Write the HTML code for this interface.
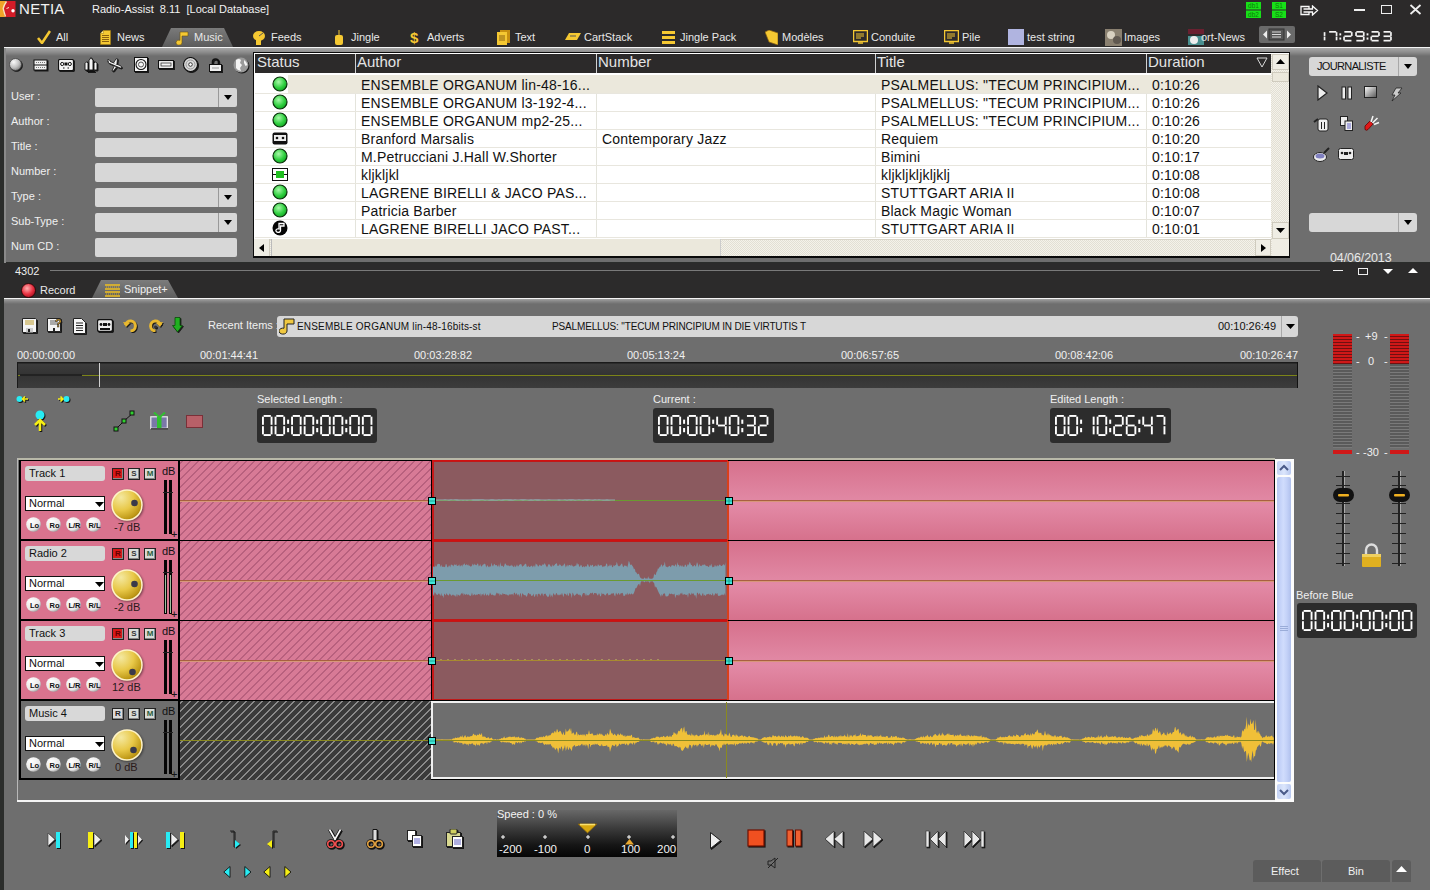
<!DOCTYPE html>
<html><head><meta charset="utf-8">
<style>
*{box-sizing:border-box;margin:0;padding:0}
html,body{width:1430px;height:890px;overflow:hidden;background:#2b2d2b;font-family:"Liberation Sans",sans-serif;font-size:11px;color:#fff}
.a{position:absolute}
#top{left:0;top:0;width:1430px;height:48px;background:#2c2a2a}
#upper{left:4px;top:48px;width:1426px;height:214px;background:#6e6e6e}
#status{left:0;top:262px;width:1430px;height:36px;background:#2c2a2a}
#lower{left:4px;top:298px;width:1426px;height:592px;background:#6e6e6e}
.tab{top:29px;height:18px;font-size:11px;color:#e8e8e8;line-height:16px}
.lbl{left:11px;font-size:11px;color:#f0f0f0}
.inp{left:95px;width:142px;height:19px;background:#d7d7d7;border-radius:2px}
.dd{position:absolute;right:0;top:0;width:19px;height:19px;border-left:1px solid #999}
.dd:after{content:"";position:absolute;left:5px;top:7px;border-left:4px solid transparent;border-right:4px solid transparent;border-top:5px solid #000}
#tbl{left:254px;top:53px;width:1035px;height:204px;background:#fff;border:1px solid #222}
.th{position:absolute;top:0;height:19px;background:#2c2a2a;color:#e6e6e6;font-size:14px;line-height:18px;padding-left:2px;border-left:1px solid #ccc}
.rowx{position:absolute;left:0;width:1015px;height:18px;border-bottom:1px solid #e8e8e0;font-size:14px;color:#111;line-height:18px}
.c{position:absolute;top:0;height:18px;white-space:nowrap;overflow:hidden}
.lcd{background:#2b2b2b;border-radius:3px;color:#fff;font-family:"Liberation Mono",monospace}
</style></head><body>

<div id="top" class="a">
 <svg class="a" style="left:0;top:0" width="16" height="18"><rect x="0" y="1" width="15.5" height="16" fill="#d41c28"/><path d="M0 1h6L3 8.5 5 17H0z" fill="#f0a428"/><path d="M6.5 1.5Q4 5 3.2 8.5 4 12 5.5 16.5" stroke="#f8e8c0" stroke-width="1.3" fill="none"/><path d="M6.5 8.5l2.5-1" stroke="#f8e8c0" stroke-width="1"/><circle cx="13" cy="10.8" r="1.7" fill="#fff"/></svg>
 <div class="a" style="left:19px;top:0px;font-size:15px;color:#f2f2f2;letter-spacing:0.3px">NETIA</div>
 <div class="a" style="left:92px;top:3px;font-size:11px;color:#f2f2f2">Radio-Assist&nbsp; 8.11&nbsp; [Local Database]</div>
 <svg class="a" style="left:1246px;top:2px" width="41" height="17"><g fill="#18e018"><rect x="0" y="0" width="15" height="7.5"/><rect x="0" y="8.5" width="15" height="7.5"/><rect x="26" y="0" width="14" height="7.5"/><rect x="26" y="8.5" width="14" height="7.5"/></g><g font-family="Liberation Sans" font-size="6.5" fill="#0a7a0a" text-anchor="middle"><text x="7.5" y="6.3">db1</text><text x="7.5" y="14.8">db2</text><text x="33" y="6.3">S1</text><text x="33" y="14.8">S2</text></g></svg>
 <svg class="a" style="left:1300px;top:5px" width="19" height="11"><path d="M1 1.5h8v2.5h3.5V1l5 4.5-5 4.5V7H9v2.5H1z M3.5 4h5.5 M3.5 7h5.5" stroke="#fafafa" stroke-width="1.3" fill="none"/></svg>
 <div class="a" style="left:1354px;top:9px;width:11px;height:1.5px;background:#eee"></div>
 <div class="a" style="left:1381px;top:5px;width:11px;height:9px;border:1.5px solid #eee"></div>
 <svg class="a" style="left:1409px;top:4px" width="13" height="11"><path d="M1.5 1l10 9M11.5 1l-10 9" stroke="#eee" stroke-width="1.8"/></svg>
 <div class="a" style="left:162px;top:28px;width:71px;height:19px;background:linear-gradient(#7a7a7a,#5c5c5c);clip-path:polygon(9px 0,62px 0,71px 19px,0 19px);border-radius:3px 3px 0 0"></div>
 <div class="a" style="left:37px;top:30px"><svg width="14" height="14"><path d="M1 8l4 5 8-12" stroke="#f5c832" stroke-width="2.6" fill="none"/></svg></div>
 <div class="a tab" style="left:56px">All</div>
 <div class="a" style="left:100px;top:30px"><svg width="11" height="15"><path d="M3.5 .5h7v14H.5V3.5z" fill="#f5c832" stroke="#a88010" stroke-width=".6"/><path d="M.5 3.5h3v-3" fill="#fff0a0" stroke="#a88010" stroke-width=".6"/><path d="M2 5.5h7M2 7.5h7M2 9.5h7M2 11.5h7" stroke="#8a6010" stroke-width="1"/></svg></div>
 <div class="a tab" style="left:117px">News</div>
 <div class="a" style="left:175px;top:30px"><svg width="14" height="15"><path d="M5 2h8v4H7v6.5a3 2.5 0 1 1-2-2.2z" fill="#f5c832" stroke="#6a5010" stroke-width=".6"/></svg></div>
 <div class="a tab" style="left:194px">Music</div>
 <div class="a" style="left:253px;top:30px"><svg width="13" height="15"><ellipse cx="6" cy="6" rx="6" ry="5" fill="#f5c832"/><rect x="3" y="10" width="5" height="5" fill="#f5c832"/><path d="M6 6l4-3" stroke="#555"/></svg></div>
 <div class="a tab" style="left:271px">Feeds</div>
 <div class="a" style="left:334px;top:30px"><svg width="10" height="15"><rect x="1" y="5" width="8" height="10" rx="2" fill="#f5c832"/><path d="M5 0v5" stroke="#f5c832"/></svg></div>
 <div class="a tab" style="left:351px">Jingle</div>
 <div class="a" style="left:410px;top:30px"><svg width="9" height="15"><text x="0" y="13" font-size="15" font-weight="bold" fill="#f5c832" font-family="Liberation Sans">$</text></svg></div>
 <div class="a tab" style="left:427px">Adverts</div>
 <div class="a" style="left:497px;top:30px"><svg width="13" height="15"><rect x="3" y="0" width="10" height="13" fill="#c89010"/><rect x="0" y="2" width="10" height="13" fill="#f5c832"/><path d="M2 6h6M2 8h6M2 10h6" stroke="#8a6010"/></svg></div>
 <div class="a tab" style="left:515px">Text</div>
 <div class="a" style="left:565px;top:30px"><svg width="16" height="12"><path d="M4 3h12l-4 7H0z" fill="#f5c832"/><path d="M5 6h6" stroke="#555"/></svg></div>
 <div class="a tab" style="left:584px">CartStack</div>
 <div class="a" style="left:662px;top:30px"><svg width="13" height="15"><rect x="0" y="1" width="13" height="3" fill="#f5c832"/><rect x="0" y="6" width="13" height="3" fill="#f5c832"/><rect x="0" y="11" width="13" height="3" fill="#f5c832"/></svg></div>
 <div class="a tab" style="left:680px">Jingle Pack</div>
 <div class="a" style="left:765px;top:30px"><svg width="13" height="15"><path d="M0 2l4 -2 9 3v12l-9-3z" fill="#f5c832" stroke="#8a6010" stroke-width=".7"/></svg></div>
 <div class="a tab" style="left:782px">Modèles</div>
 <div class="a" style="left:853px;top:30px"><svg width="15" height="14"><rect x="0.5" y="0.5" width="14" height="11" fill="none" stroke="#f5c832" stroke-width="1.5"/><path d="M3 4h8M3 6h8M3 8h5" stroke="#f5c832"/><path d="M5 13h5" stroke="#f5c832" stroke-width="1.5"/></svg></div>
 <div class="a tab" style="left:871px">Conduite</div>
 <div class="a" style="left:944px;top:30px"><svg width="15" height="14"><rect x="0.5" y="0.5" width="14" height="11" fill="none" stroke="#f5c832" stroke-width="1.5"/><path d="M3 4h8M3 6h8M3 8h5" stroke="#f5c832"/><path d="M5 13h5" stroke="#f5c832" stroke-width="1.5"/></svg></div>
 <div class="a tab" style="left:962px">Pile</div>
 <div class="a" style="left:1008px;top:29px"><svg width="16" height="16"><rect x="0" y="0" width="16" height="16" fill="#b0b4e0"/></svg></div>
 <div class="a tab" style="left:1027px">test string</div>
 <div class="a" style="left:1105px;top:29px"><svg width="17" height="17"><rect x="0" y="0" width="17" height="17" fill="#8a8070"/><circle cx="6" cy="6" r="4" fill="#d8d0c0"/><circle cx="12" cy="11" r="4" fill="#605850"/></svg></div>
 <div class="a tab" style="left:1124px">Images</div>
 <div class="a" style="left:1188px;top:29px"><svg width="16" height="16"><rect x="0" y="0" width="16" height="5" fill="#6a2030"/><rect x="0" y="7" width="16" height="9" fill="#4a9090"/><circle cx="6" cy="11" r="4" fill="#eee"/></svg></div>
 <div class="a tab" style="left:1201px">ort-News</div>

 <div class="a" style="left:1259px;top:26px;width:36px;height:17px;background:#6a6a6a;border-radius:2px"></div>
 <svg class="a" style="left:1259px;top:26px" width="36" height="17"><path d="M4 8.5l4-4v8z M32 8.5l-4-4v8z" fill="#eee"/><rect x="10" y="3" width="15" height="11" fill="#555" stroke="#333"/><path d="M13 6h9M13 8.5h9M13 11h9" stroke="#ddd"/></svg>
 <svg class="a" style="left:1316px;top:30.5px" width="77" height="12"><g fill="#f4f4f4"><rect x="7.70" y="1.15" width="1.70" height="3.80"/><rect x="7.70" y="5.55" width="1.70" height="3.80"/><rect x="13.15" y="0.00" width="7.10" height="1.70"/><rect x="19.70" y="1.15" width="1.70" height="3.80"/><rect x="19.70" y="5.55" width="1.70" height="3.80"/><rect x="23.40" y="2.31" width="1.80" height="2.10"/><rect x="23.40" y="6.51" width="1.80" height="2.10"/><rect x="28.35" y="0.00" width="7.10" height="1.70"/><rect x="28.35" y="8.80" width="7.10" height="1.70"/><rect x="28.35" y="4.40" width="7.10" height="1.70"/><rect x="27.20" y="5.55" width="1.70" height="3.80"/><rect x="34.90" y="1.15" width="1.70" height="3.80"/><rect x="40.35" y="0.00" width="7.10" height="1.70"/><rect x="40.35" y="8.80" width="7.10" height="1.70"/><rect x="40.35" y="4.40" width="7.10" height="1.70"/><rect x="39.20" y="1.15" width="1.70" height="3.80"/><rect x="46.90" y="1.15" width="1.70" height="3.80"/><rect x="46.90" y="5.55" width="1.70" height="3.80"/><rect x="50.60" y="2.31" width="1.80" height="2.10"/><rect x="50.60" y="6.51" width="1.80" height="2.10"/><rect x="55.55" y="0.00" width="7.10" height="1.70"/><rect x="55.55" y="8.80" width="7.10" height="1.70"/><rect x="55.55" y="4.40" width="7.10" height="1.70"/><rect x="54.40" y="5.55" width="1.70" height="3.80"/><rect x="62.10" y="1.15" width="1.70" height="3.80"/><rect x="67.55" y="0.00" width="7.10" height="1.70"/><rect x="67.55" y="8.80" width="7.10" height="1.70"/><rect x="67.55" y="4.40" width="7.10" height="1.70"/><rect x="74.10" y="1.15" width="1.70" height="3.80"/><rect x="74.10" y="5.55" width="1.70" height="3.80"/></g></svg>
 <div class="a" style="left:4px;top:47px;width:1426px;height:1px;background:#f4f4f4"></div>
</div>


<div id="upper" class="a" style="background:linear-gradient(#a8a8a8 0,#8e8e8e 4px,#6e6e6e 8px,#6e6e6e)">
</div>
<div class="a" style="left:4px;top:48px;width:2px;height:215px;background:#8a8a8a"></div>
<svg class="a" style="left:9px;top:58px;filter:drop-shadow(1px 1px 0 #1a1a1a)" width="13" height="13"><defs><radialGradient id="sph" cx=".35" cy=".3" r=".75"><stop offset="0" stop-color="#fafafa"/><stop offset=".6" stop-color="#c0c0c0"/><stop offset="1" stop-color="#808080"/></radialGradient></defs><circle cx="6.5" cy="6.5" r="6" fill="url(#sph)" stroke="#444" stroke-width=".8"/></svg>
<svg class="a" style="left:33px;top:59px;filter:drop-shadow(1px 1px 0 #1a1a1a)" width="15" height="12"><rect x=".5" y=".5" width="14" height="11" fill="#111"/><rect x="1.5" y="1.5" width="12" height="4" fill="#f0f0f0"/><rect x="1.5" y="6.5" width="12" height="4" fill="#f0f0f0"/><path d="M3 3.5h9M3 8.5h9" stroke="#777" stroke-dasharray="1 1"/></svg>
<svg class="a" style="left:58px;top:59px;filter:drop-shadow(1px 1px 0 #1a1a1a)" width="16" height="12"><rect x=".5" y=".5" width="15" height="11" rx="1.5" fill="#f4f4f4" stroke="#111" stroke-width="1.2"/><circle cx="4.2" cy="5" r="1.6" fill="none" stroke="#111"/><circle cx="11.8" cy="5" r="1.6" fill="none" stroke="#111"/><rect x="6.5" y="3.5" width="3" height="3" fill="#111"/><path d="M5 9h1.5M9.5 9H11" stroke="#111"/></svg>
<svg class="a" style="left:84px;top:57px;filter:drop-shadow(1px 1px 0 #1a1a1a)" width="14" height="15"><path d="M7 .5l2 3v9.5H5V3.5z" fill="#f4f4f4" stroke="#111" stroke-width=".9"/><path d="M1 13V6.5l2-2 1 2V13zM13 13V6.5l-2-2-1 2V13z" fill="#f4f4f4" stroke="#111" stroke-width=".9"/><path d="M3 14.5h8" stroke="#111" stroke-width="1.2"/></svg>
<svg class="a" style="left:107px;top:58px;filter:drop-shadow(1px 1px 0 #1a1a1a)" width="16" height="14"><path d="M1 3.5q0-1 1-.5l11 4.5q2 1 1.5 2t-2.5 0L1.5 5z" fill="#f4f4f4" stroke="#111" stroke-width=".8"/><path d="M6.5 5L9 .8h1.5L9.8 7M7 8.5L5 13h1.5l3-4" fill="#f4f4f4" stroke="#111" stroke-width=".8"/><path d="M1.5 4L.8 1.5h1.2l1.8 2.5" fill="#f4f4f4" stroke="#111" stroke-width=".7"/></svg>
<svg class="a" style="left:134px;top:57px;filter:drop-shadow(1px 1px 0 #1a1a1a)" width="14" height="15"><rect x=".5" y=".5" width="13" height="14" fill="#f4f4f4" stroke="#111"/><circle cx="7" cy="7.5" r="5" fill="none" stroke="#111" stroke-width="1.1"/><circle cx="7" cy="7.5" r="2.5" fill="none" stroke="#555" stroke-width="1"/></svg>
<svg class="a" style="left:158px;top:60px;filter:drop-shadow(1px 1px 0 #1a1a1a)" width="16" height="9"><rect x=".5" y=".5" width="15" height="8" fill="#f4f4f4" stroke="#111" stroke-width="1.1"/><rect x="3" y="3" width="10" height="3" fill="none" stroke="#333" stroke-width=".8"/></svg>
<svg class="a" style="left:183px;top:57px;filter:drop-shadow(1px 1px 0 #1a1a1a)" width="15" height="15"><circle cx="7.5" cy="7.5" r="7" fill="#d8d8d8" stroke="#111" stroke-width="1.1"/><circle cx="7.5" cy="7.5" r="4.5" fill="none" stroke="#999"/><circle cx="7.5" cy="7.5" r="1.8" fill="#fff" stroke="#111" stroke-width=".8"/></svg>
<svg class="a" style="left:209px;top:58px;filter:drop-shadow(1px 1px 0 #1a1a1a)" width="13" height="14"><path d="M3.5 6.5V4a3 3 0 0 1 6 0v2.5" stroke="#111" stroke-width="1.6" fill="none"/><rect x=".5" y="6.5" width="12" height="7" fill="#f0f0f0" stroke="#111"/><path d="M3 10h7" stroke="#999"/></svg>
<svg class="a" style="left:233px;top:57px;filter:drop-shadow(1px 1px 0 #1a1a1a)" width="16" height="16"><circle cx="8" cy="8" r="7.5" fill="#9a9a9a"/><path d="M3 3q3-2 5 0l-1 3 2 2-2 3 1 3q-3 0-5-3zM11 3q3 2 3.5 5l-2 1-1.5-3z" fill="#f4f4f4"/></svg>
<div class="a lbl" style="top:90px">User :</div>
<div class="a inp" style="top:88px"><div class="dd"></div></div>
<div class="a lbl" style="top:115px">Author :</div>
<div class="a inp" style="top:113px"></div>
<div class="a lbl" style="top:140px">Title :</div>
<div class="a inp" style="top:138px"></div>
<div class="a lbl" style="top:165px">Number :</div>
<div class="a inp" style="top:163px"></div>
<div class="a lbl" style="top:190px">Type :</div>
<div class="a inp" style="top:188px"><div class="dd"></div></div>
<div class="a lbl" style="top:215px">Sub-Type :</div>
<div class="a inp" style="top:213px"><div class="dd"></div></div>
<div class="a lbl" style="top:240px">Num CD :</div>
<div class="a inp" style="top:238px"></div>

<div class="a" style="left:253px;top:52px;width:1037px;height:206px;background:#0a0a0a"></div>
<div class="a" style="left:254px;top:53px;width:1035px;height:203px;background:#fff"></div>
<div class="a" style="left:255px;top:54px;width:1016px;height:19px;background:#2c2a2a"></div>
<div class="a" style="left:257px;top:54px;height:19px;font-size:15px;line-height:16px;color:#e4e4e4">Status</div>
<div class="a" style="left:357px;top:54px;height:19px;font-size:15px;line-height:16px;color:#e4e4e4">Author</div>
<div class="a" style="left:355px;top:54px;width:1px;height:19px;background:#d0d0d0"></div>
<div class="a" style="left:355px;top:75px;width:1px;height:162px;background:#e4e4dc"></div>
<div class="a" style="left:598px;top:54px;height:19px;font-size:15px;line-height:16px;color:#e4e4e4">Number</div>
<div class="a" style="left:596px;top:54px;width:1px;height:19px;background:#d0d0d0"></div>
<div class="a" style="left:596px;top:75px;width:1px;height:162px;background:#e4e4dc"></div>
<div class="a" style="left:877px;top:54px;height:19px;font-size:15px;line-height:16px;color:#e4e4e4">Title</div>
<div class="a" style="left:875px;top:54px;width:1px;height:19px;background:#d0d0d0"></div>
<div class="a" style="left:875px;top:75px;width:1px;height:162px;background:#e4e4dc"></div>
<div class="a" style="left:1148px;top:54px;height:19px;font-size:15px;line-height:16px;color:#e4e4e4">Duration</div>
<div class="a" style="left:1146px;top:54px;width:1px;height:19px;background:#d0d0d0"></div>
<div class="a" style="left:1146px;top:75px;width:1px;height:162px;background:#e4e4dc"></div>
<svg class="a" style="left:1256px;top:57px" width="12" height="11"><path d="M1 1h10L6 10z" fill="none" stroke="#d8d8d8" stroke-width="1"/></svg>
<div class="a" style="left:288px;top:75px;width:983px;height:18px;background:#ebe8dc"></div>
<div class="a" style="left:255px;top:93px;width:1016px;height:1px;background:#e8e6de"></div>
<div class="a" style="left:272px;top:76px;line-height:0"><svg width="16" height="16"><defs><radialGradient id="gg0" cx=".4" cy=".35" r=".7"><stop offset="0" stop-color="#a8f8a8"/><stop offset=".6" stop-color="#30d040"/><stop offset="1" stop-color="#10a020"/></radialGradient></defs><circle cx="8" cy="8" r="7" fill="url(#gg0)" stroke="#0a300a" stroke-width="1.2"/></svg></div>
<div class="a" style="left:361px;top:76px;font-size:14px;line-height:18px;color:#111;white-space:nowrap;letter-spacing:0.2px">ENSEMBLE ORGANUM lin-48-16...</div>
<div class="a" style="left:881px;top:76px;font-size:14px;line-height:18px;color:#111;white-space:nowrap;letter-spacing:0.2px">PSALMELLUS: "TECUM PRINCIPIUM...</div>
<div class="a" style="left:1152px;top:76px;font-size:14px;line-height:18px;color:#111;white-space:nowrap;letter-spacing:0.2px">0:10:26</div>
<div class="a" style="left:255px;top:111px;width:1016px;height:1px;background:#e8e6de"></div>
<div class="a" style="left:272px;top:94px;line-height:0"><svg width="16" height="16"><defs><radialGradient id="gg1" cx=".4" cy=".35" r=".7"><stop offset="0" stop-color="#a8f8a8"/><stop offset=".6" stop-color="#30d040"/><stop offset="1" stop-color="#10a020"/></radialGradient></defs><circle cx="8" cy="8" r="7" fill="url(#gg1)" stroke="#0a300a" stroke-width="1.2"/></svg></div>
<div class="a" style="left:361px;top:94px;font-size:14px;line-height:18px;color:#111;white-space:nowrap;letter-spacing:0.2px">ENSEMBLE ORGANUM l3-192-4...</div>
<div class="a" style="left:881px;top:94px;font-size:14px;line-height:18px;color:#111;white-space:nowrap;letter-spacing:0.2px">PSALMELLUS: "TECUM PRINCIPIUM...</div>
<div class="a" style="left:1152px;top:94px;font-size:14px;line-height:18px;color:#111;white-space:nowrap;letter-spacing:0.2px">0:10:26</div>
<div class="a" style="left:255px;top:129px;width:1016px;height:1px;background:#e8e6de"></div>
<div class="a" style="left:272px;top:112px;line-height:0"><svg width="16" height="16"><defs><radialGradient id="gg2" cx=".4" cy=".35" r=".7"><stop offset="0" stop-color="#a8f8a8"/><stop offset=".6" stop-color="#30d040"/><stop offset="1" stop-color="#10a020"/></radialGradient></defs><circle cx="8" cy="8" r="7" fill="url(#gg2)" stroke="#0a300a" stroke-width="1.2"/></svg></div>
<div class="a" style="left:361px;top:112px;font-size:14px;line-height:18px;color:#111;white-space:nowrap;letter-spacing:0.2px">ENSEMBLE ORGANUM mp2-25...</div>
<div class="a" style="left:881px;top:112px;font-size:14px;line-height:18px;color:#111;white-space:nowrap;letter-spacing:0.2px">PSALMELLUS: "TECUM PRINCIPIUM...</div>
<div class="a" style="left:1152px;top:112px;font-size:14px;line-height:18px;color:#111;white-space:nowrap;letter-spacing:0.2px">0:10:26</div>
<div class="a" style="left:255px;top:147px;width:1016px;height:1px;background:#e8e6de"></div>
<div class="a" style="left:272px;top:132px;line-height:0"><svg width="16" height="13"><rect x=".5" y=".5" width="15" height="12" rx="2" fill="#111"/><rect x="2" y="3" width="12" height="6" fill="#eee"/><circle cx="5" cy="6" r="1.3" fill="#111"/><circle cx="11" cy="6" r="1.3" fill="#111"/></svg></div>
<div class="a" style="left:361px;top:130px;font-size:14px;line-height:18px;color:#111;white-space:nowrap;letter-spacing:0.2px">Branford Marsalis</div>
<div class="a" style="left:602px;top:130px;font-size:14px;line-height:18px;color:#111;white-space:nowrap;letter-spacing:0.2px">Contemporary Jazz</div>
<div class="a" style="left:881px;top:130px;font-size:14px;line-height:18px;color:#111;white-space:nowrap;letter-spacing:0.2px">Requiem</div>
<div class="a" style="left:1152px;top:130px;font-size:14px;line-height:18px;color:#111;white-space:nowrap;letter-spacing:0.2px">0:10:20</div>
<div class="a" style="left:255px;top:165px;width:1016px;height:1px;background:#e8e6de"></div>
<div class="a" style="left:272px;top:148px;line-height:0"><svg width="16" height="16"><defs><radialGradient id="gg4" cx=".4" cy=".35" r=".7"><stop offset="0" stop-color="#a8f8a8"/><stop offset=".6" stop-color="#30d040"/><stop offset="1" stop-color="#10a020"/></radialGradient></defs><circle cx="8" cy="8" r="7" fill="url(#gg4)" stroke="#0a300a" stroke-width="1.2"/></svg></div>
<div class="a" style="left:361px;top:148px;font-size:14px;line-height:18px;color:#111;white-space:nowrap;letter-spacing:0.2px">M.Petrucciani J.Hall W.Shorter</div>
<div class="a" style="left:881px;top:148px;font-size:14px;line-height:18px;color:#111;white-space:nowrap;letter-spacing:0.2px">Bimini</div>
<div class="a" style="left:1152px;top:148px;font-size:14px;line-height:18px;color:#111;white-space:nowrap;letter-spacing:0.2px">0:10:17</div>
<div class="a" style="left:255px;top:183px;width:1016px;height:1px;background:#e8e6de"></div>
<div class="a" style="left:272px;top:168px;line-height:0"><svg width="16" height="13"><rect x=".5" y=".5" width="15" height="12" fill="#fff" stroke="#111"/><path d="M1 6.5h14" stroke="#111"/><rect x="4" y="3" width="8" height="7" fill="#20c020"/></svg></div>
<div class="a" style="left:361px;top:166px;font-size:14px;line-height:18px;color:#111;white-space:nowrap;letter-spacing:0.2px">kljkljkl</div>
<div class="a" style="left:881px;top:166px;font-size:14px;line-height:18px;color:#111;white-space:nowrap;letter-spacing:0.2px">kljkljkljkljklj</div>
<div class="a" style="left:1152px;top:166px;font-size:14px;line-height:18px;color:#111;white-space:nowrap;letter-spacing:0.2px">0:10:08</div>
<div class="a" style="left:255px;top:201px;width:1016px;height:1px;background:#e8e6de"></div>
<div class="a" style="left:272px;top:184px;line-height:0"><svg width="16" height="16"><defs><radialGradient id="gg6" cx=".4" cy=".35" r=".7"><stop offset="0" stop-color="#a8f8a8"/><stop offset=".6" stop-color="#30d040"/><stop offset="1" stop-color="#10a020"/></radialGradient></defs><circle cx="8" cy="8" r="7" fill="url(#gg6)" stroke="#0a300a" stroke-width="1.2"/></svg></div>
<div class="a" style="left:361px;top:184px;font-size:14px;line-height:18px;color:#111;white-space:nowrap;letter-spacing:0.2px">LAGRENE BIRELLI &amp; JACO PAS...</div>
<div class="a" style="left:881px;top:184px;font-size:14px;line-height:18px;color:#111;white-space:nowrap;letter-spacing:0.2px">STUTTGART ARIA II</div>
<div class="a" style="left:1152px;top:184px;font-size:14px;line-height:18px;color:#111;white-space:nowrap;letter-spacing:0.2px">0:10:08</div>
<div class="a" style="left:255px;top:219px;width:1016px;height:1px;background:#e8e6de"></div>
<div class="a" style="left:272px;top:202px;line-height:0"><svg width="16" height="16"><defs><radialGradient id="gg7" cx=".4" cy=".35" r=".7"><stop offset="0" stop-color="#a8f8a8"/><stop offset=".6" stop-color="#30d040"/><stop offset="1" stop-color="#10a020"/></radialGradient></defs><circle cx="8" cy="8" r="7" fill="url(#gg7)" stroke="#0a300a" stroke-width="1.2"/></svg></div>
<div class="a" style="left:361px;top:202px;font-size:14px;line-height:18px;color:#111;white-space:nowrap;letter-spacing:0.2px">Patricia Barber</div>
<div class="a" style="left:881px;top:202px;font-size:14px;line-height:18px;color:#111;white-space:nowrap;letter-spacing:0.2px">Black Magic Woman</div>
<div class="a" style="left:1152px;top:202px;font-size:14px;line-height:18px;color:#111;white-space:nowrap;letter-spacing:0.2px">0:10:07</div>
<div class="a" style="left:255px;top:237px;width:1016px;height:1px;background:#e8e6de"></div>
<div class="a" style="left:272px;top:220px;line-height:0"><svg width="16" height="16"><circle cx="8" cy="8" r="7.5" fill="#050505"/><path d="M7 3.5h5v2.5H8.5v4.5a2.3 1.8 0 1 1-1.5-1.6z" fill="none" stroke="#fff" stroke-width="1.3"/></svg></div>
<div class="a" style="left:361px;top:220px;font-size:14px;line-height:18px;color:#111;white-space:nowrap;letter-spacing:0.2px">LAGRENE BIRELLI JACO PAST...</div>
<div class="a" style="left:881px;top:220px;font-size:14px;line-height:18px;color:#111;white-space:nowrap;letter-spacing:0.2px">STUTTGART ARIA II</div>
<div class="a" style="left:1152px;top:220px;font-size:14px;line-height:18px;color:#111;white-space:nowrap;letter-spacing:0.2px">0:10:01</div>
<div class="a" style="left:1271px;top:54px;width:18px;height:185px;background:repeating-conic-gradient(#f4f2ea 0 25%,#e2dfd4 0 50%) 0 0/2px 2px"></div>
<div class="a" style="left:1272px;top:54px;width:17px;height:16px;background:#efede4;border:1px solid #cfcbbe"></div>
<svg class="a" style="left:1275px;top:58px" width="11" height="7"><path d="M1 6h9L5.5 1z" fill="#000"/></svg>
<div class="a" style="left:1272px;top:72px;width:17px;height:10px;background:#ebe8dc;border:1px solid #cfcbbe"></div>
<div class="a" style="left:1272px;top:222px;width:17px;height:17px;background:#efede4;border:1px solid #cfcbbe"></div>
<svg class="a" style="left:1275px;top:227px" width="11" height="7"><path d="M1 1h9L5.5 6z" fill="#000"/></svg>
<div class="a" style="left:254px;top:239px;width:1018px;height:17px;background:repeating-conic-gradient(#f4f2ea 0 25%,#e2dfd4 0 50%) 0 0/2px 2px;border-top:1px solid #d8d4c8"></div>
<div class="a" style="left:254px;top:239px;width:16px;height:17px;background:#efede4;border-right:1px solid #cfcbbe"></div>
<svg class="a" style="left:258px;top:243px" width="7" height="10"><path d="M6 1v8L1 5z" fill="#000"/></svg>
<div class="a" style="left:271px;top:239px;width:450px;height:17px;background:#ebe8dc;border-left:1px solid #bbb;border-right:1px solid #ccc"></div>
<div class="a" style="left:1255px;top:239px;width:16px;height:17px;background:#efede4;border:1px solid #cfcbbe"></div>
<svg class="a" style="left:1260px;top:243px" width="7" height="10"><path d="M1 1v8L6 5z" fill="#000"/></svg>
<div class="a" style="left:1272px;top:239px;width:17px;height:17px;background:#efede4"></div>

<div class="a" style="left:1309px;top:57px;width:108px;height:19px;background:#d7d7d7;border-radius:3px"><div class="dd" style="border-left:1px solid #a8a8a8"></div></div>
<div class="a" style="left:1317px;top:59px;font-size:11px;color:#111;line-height:14px;letter-spacing:-0.65px">JOURNALISTE</div>
<svg class="a" style="left:1316px;top:85px" width="12" height="16"><path d="M2 1l9 7-9 7z" fill="#eee" stroke="#222" stroke-width="1.2"/></svg>
<svg class="a" style="left:1341px;top:86px" width="12" height="14"><rect x="1" y="1" width="3.5" height="12" fill="#eee" stroke="#222"/><rect x="7" y="1" width="3.5" height="12" fill="#eee" stroke="#222"/></svg>
<svg class="a" style="left:1364px;top:86px" width="14" height="13"><defs><linearGradient id="stg" x1="0" y1="0" x2="1" y2="1"><stop offset="0" stop-color="#fff"/><stop offset="1" stop-color="#555"/></linearGradient></defs><rect x=".5" y=".5" width="12" height="11" fill="url(#stg)" stroke="#222"/></svg>
<svg class="a" style="left:1390px;top:87px" width="13" height="15"><path d="M6 1h6L8 6h3L2 14l3-6H2z" fill="#ccc" stroke="#222" stroke-width=".8"/></svg>
<svg class="a" style="left:1313px;top:116px" width="16" height="16"><path d="M1 6l4-3" stroke="#222" stroke-width="2"/><rect x="5" y="3" width="10" height="12" rx="2" fill="#eee" stroke="#222"/><path d="M8.5 6v7M11.5 6v7" stroke="#222"/></svg>
<svg class="a" style="left:1340px;top:116px" width="13" height="15"><rect x=".5" y=".5" width="7" height="9" fill="#eee" stroke="#222"/><rect x="5" y="5" width="7.5" height="9.5" fill="#eee" stroke="#222"/><path d="M7 8h4M7 10h4M7 12h4" stroke="#66c"/></svg>
<svg class="a" style="left:1363px;top:115px" width="18" height="18"><path d="M2 11l5-5 3 3-5 5.5q-1.5 1.5-3 0z" fill="#e01818" stroke="#600" stroke-width=".8"/><path d="M8 7l2-6M9.5 8l5-5M11 9.5l5-2" stroke="#f4f4f4" stroke-width="1.5"/></svg>
<svg class="a" style="left:1313px;top:146px" width="17" height="17"><ellipse cx="7" cy="11" rx="6.5" ry="4.5" fill="#eee" stroke="#222"/><ellipse cx="7" cy="10" rx="4.5" ry="2.5" fill="#8080c0"/><path d="M11 7l5-5" stroke="#222" stroke-width="2"/></svg>
<svg class="a" style="left:1338px;top:148px" width="16" height="12"><rect x=".5" y=".5" width="15" height="11" rx="2" fill="#eee" stroke="#222"/><circle cx="4" cy="5" r="1.3" fill="#222"/><circle cx="12" cy="5" r="1.3" fill="#222"/><rect x="6" y="4" width="4" height="3" fill="#222"/></svg>
<div class="a" style="left:1309px;top:213px;width:108px;height:19px;background:#d7d7d7;border-radius:3px"><div class="dd" style="border-left:1px solid #a8a8a8"></div></div>

<div id="status" class="a" style="left:0;top:263px;width:1430px;height:35px;background:#2c2b2b">
 <div class="a" style="left:15px;top:2px;font-size:11px;color:#eee">4302</div>
 <div class="a" style="left:50px;top:7px;width:1270px;height:1px;background:#7a7a7a"></div>
 <div class="a" style="left:1333px;top:7px;width:10px;height:1px;background:#eee"></div>
 <div class="a" style="left:1358px;top:5px;width:10px;height:7px;border:1px solid #eee"></div>
 <svg class="a" style="left:1382px;top:5px" width="12" height="7"><path d="M1 1h10L6 6z" fill="#fff"/></svg>
 <svg class="a" style="left:1407px;top:4px" width="12" height="7"><path d="M1 6h10L6 1z" fill="#fff"/></svg>
 <svg class="a" style="left:21px;top:20px" width="15" height="15"><defs><radialGradient id="rg" cx=".4" cy=".35" r=".7"><stop offset="0" stop-color="#ffb0b0"/><stop offset=".6" stop-color="#e83040"/><stop offset="1" stop-color="#a01020"/></radialGradient></defs><circle cx="7.5" cy="7.5" r="7" fill="url(#rg)" stroke="#200" stroke-width=".8"/></svg>
 <div class="a" style="left:40px;top:21px;font-size:11px;color:#e8e8e8">Record</div>
 <div class="a" style="left:92px;top:17px;width:86px;height:18px;background:linear-gradient(#7c7c7c,#5e5e5e);clip-path:polygon(9px 0,76px 0,86px 18px,0 18px)"></div>
 <svg class="a" style="left:104px;top:20px" width="17" height="15"><path d="M1 2h15M1 6h15M1 9h15M1 13h15" stroke="#f0c020" stroke-width="1.6"/><path d="M2 4h13M2 11h13" stroke="#f0c020" stroke-width=".8" stroke-dasharray="1 1"/></svg>
 <div class="a" style="left:124px;top:20px;font-size:11px;color:#f0f0f0">Snippet+</div>
</div>
<div class="a" style="left:4px;top:298px;width:1426px;height:1px;background:#f4f4f4"></div>
<div class="a" style="left:1330px;top:251px;font-size:12.5px;color:#e8e8e8;letter-spacing:-0.1px">04/06/2013</div>

<div id="lower" class="a" style="left:4px;top:299px;width:1426px;height:591px;background:linear-gradient(#a4a4a4 0,#8a8a8a 2px,#6e6e6e 5px,#6e6e6e)"></div>
<!--LOWER--><svg class="a" style="left:22px;top:318px;filter:drop-shadow(1px 1px 0 #1a1a1a)" width="15" height="15"><path d="M.5 .5h13l1 1v13H.5z" fill="#f4f4f4" stroke="#222"/><rect x="3" y="2" width="9" height="5" fill="#d8c890"/><rect x="4" y="10" width="7" height="4.5" fill="#ccc"/><rect x="6" y="11" width="2" height="3" fill="#222"/></svg>
<svg class="a" style="left:47px;top:317px;filter:drop-shadow(1px 1px 0 #1a1a1a)" width="16" height="16"><path d="M.5 1.5h13v13H.5z" fill="#f4f4f4" stroke="#222"/><rect x="3" y="3" width="8" height="5" fill="#aaa"/><rect x="6" y="11" width="2" height="3" fill="#222"/><text x="8" y="10" font-size="11" font-weight="bold" fill="#e0a020" stroke="#222" stroke-width=".5" font-family="Liberation Sans">?</text></svg>
<svg class="a" style="left:73px;top:318px;filter:drop-shadow(1px 1px 0 #1a1a1a)" width="13" height="16"><path d="M.5 .5h8l4 4v11H.5z" fill="#f8f8f8" stroke="#222"/><path d="M3 5h7M3 7.5h7M3 10h7M3 12.5h7" stroke="#222"/></svg>
<svg class="a" style="left:97px;top:319px;filter:drop-shadow(1px 1px 0 #1a1a1a)" width="16" height="13"><rect x=".5" y=".5" width="15" height="12" rx="2" fill="#eee" stroke="#111" stroke-width="1.3"/><circle cx="4" cy="5.5" r="1.4" fill="#111"/><circle cx="12" cy="5.5" r="1.4" fill="#111"/><rect x="6" y="4" width="4" height="3" fill="#111"/><rect x="3" y="9" width="10" height="2" fill="#111"/></svg>
<svg class="a" style="left:123px;top:318px;filter:drop-shadow(1px 1px 0 #1a1a1a)" width="15" height="14"><path d="M7.5 13a5 5 0 1 0-5-6" stroke="#e8b830" stroke-width="3" fill="none"/><path d="M0 4l3 5 4-4z" fill="#e8b830"/></svg>
<svg class="a" style="left:148px;top:318px;filter:drop-shadow(1px 1px 0 #1a1a1a)" width="15" height="14"><path d="M7.5 13a5 5 0 1 1 5-6" stroke="#e8b830" stroke-width="3" fill="none"/><path d="M15 4l-3 5-4-4z" fill="#e8b830"/><circle cx="7.5" cy="9" r="1.5" fill="#333"/></svg>
<svg class="a" style="left:172px;top:317px;filter:drop-shadow(1px 1px 0 #1a1a1a)" width="11" height="16"><path d="M3 .5h5v8h2.5L5.5 15 .5 8.5H3z" fill="#20b020" stroke="#0a4a0a" stroke-width=".8"/></svg>
<div class="a" style="left:208px;top:319px;white-space:nowrap;font-size:11px;color:#f0f0f0">Recent Items :</div>
<div class="a" style="left:277px;top:316px;width:1021px;height:21px;background:#d7d7d7;border-radius:3px"></div>
<div class="a" style="left:1281px;top:316px;width:1px;height:21px;background:#a8a8a8"></div>
<svg class="a" style="left:1286px;top:324px" width="9" height="6"><path d="M0 0h9L4.5 5z" fill="#000"/></svg>
<svg class="a" style="left:279px;top:317px" width="16" height="18"><path d="M5 2h10v5H8v7a4 3 0 1 1-3-2.8z" fill="#f0c840" stroke="#222" stroke-width="1"/></svg>
<div class="a" style="left:297px;top:321px;white-space:nowrap;font-size:10px;color:#111;letter-spacing:0.18px">ENSEMBLE ORGANUM lin-48-16bits-st</div>
<div class="a" style="left:552px;top:321px;white-space:nowrap;font-size:10px;color:#111;letter-spacing:-0.15px">PSALMELLUS: &quot;TECUM PRINCIPIUM IN DIE VIRTUTIS T</div>
<div class="a" style="left:1218px;top:320px;white-space:nowrap;font-size:11px;color:#111">00:10:26:49</div>
<div class="a" style="left:17px;top:349px;white-space:nowrap;font-size:11px;color:#f0f0f0">00:00:00:00</div>
<div class="a" style="left:200px;top:349px;white-space:nowrap;font-size:11px;color:#f0f0f0">00:01:44:41</div>
<div class="a" style="left:414px;top:349px;white-space:nowrap;font-size:11px;color:#f0f0f0">00:03:28:82</div>
<div class="a" style="left:627px;top:349px;white-space:nowrap;font-size:11px;color:#f0f0f0">00:05:13:24</div>
<div class="a" style="left:841px;top:349px;white-space:nowrap;font-size:11px;color:#f0f0f0">00:06:57:65</div>
<div class="a" style="left:1055px;top:349px;white-space:nowrap;font-size:11px;color:#f0f0f0">00:08:42:06</div>
<div class="a" style="left:1240px;top:349px;white-space:nowrap;font-size:11px;color:#f0f0f0">00:10:26:47</div>
<div class="a" style="left:17px;top:362px;width:1281px;height:26px;background:linear-gradient(#1a1a1a 0,#1a1a1a 1px,#3c3c3c 2px,#333 50%,#3c3c3c)"></div>
<div class="a" style="left:17px;top:375px;width:1281px;height:1px;background:#7c8418"></div>
<div class="a" style="left:99px;top:363px;width:1px;height:24px;background:#d0d0d0"></div>
<div class="a" style="left:1297px;top:362px;width:1px;height:26px;background:#111"></div>
<div class="a" style="left:17px;top:362px;width:1px;height:26px;background:#1a1a1a"></div>
<div class="a" style="left:20px;top:374px;width:62px;height:2px;background:#222"></div>
<svg class="a" style="left:16px;top:395px;filter:drop-shadow(1px 1px 0 #151515)" width="13" height="9"><circle cx="3.5" cy="4" r="3" fill="#28ecf4"/><path d="M12 4H7M9 1.5 6.5 4 9 6.5" stroke="#f6ee14" stroke-width="1.6" fill="none"/></svg>
<svg class="a" style="left:58px;top:395px;filter:drop-shadow(1px 1px 0 #151515)" width="13" height="9"><circle cx="8.5" cy="4" r="3" fill="#28ecf4"/><path d="M0 4h5M2.5 1.5 5 4 2.5 6.5" stroke="#f6ee14" stroke-width="1.6" fill="none"/></svg>
<svg class="a" style="left:33px;top:410px;filter:drop-shadow(1px 1px 0 #151515)" width="14" height="22"><circle cx="7" cy="5" r="4.5" fill="#28ecf4"/><path d="M7 10v11M2 15l5-5 5 5" stroke="#f6ee14" stroke-width="2.5" fill="none"/></svg>
<svg class="a" style="left:113px;top:410px" width="23" height="22"><path d="M3 19L11 11L20 3" stroke="#111" stroke-width="1" fill="none"/><rect x="1" y="17" width="4" height="4" fill="#30d030" stroke="#111" stroke-width="1"/><rect x="9" y="9" width="4" height="4" fill="#30d030" stroke="#111" stroke-width="1"/><rect x="17" y="1" width="4" height="4" fill="#30d030" stroke="#111" stroke-width="1"/></svg>
<svg class="a" style="left:150px;top:412px" width="20" height="18"><rect x=".8" y="4.8" width="16.5" height="11.5" fill="#7a78a8" stroke="#eee" stroke-width="1.2"/><path d="M1 16.8h17" stroke="#111"/><rect x="7" y="5" width="4.5" height="11" fill="#30c030"/><path d="M4 .5l5.5 5L15 .5" stroke="#30c030" stroke-width="2" fill="none"/></svg>
<div class="a" style="left:186px;top:415px;width:17px;height:13px;background:#b86068;border:1px solid #7a3038"></div>
<div class="a" style="left:257px;top:393px;white-space:nowrap;font-size:11px;color:#f0f0f0">Selected Length :</div>
<div class="a" style="left:257px;top:408px;width:120px;height:35px;background:#2c2c2c;border-radius:3px"></div>
<svg class="a" style="left:261.8px;top:415px" width="112" height="22"><g fill="#fff"><rect x="1.65" y="0.00" width="7.20" height="1.90"/><rect x="1.65" y="19.10" width="7.20" height="1.90"/><rect x="0.00" y="1.65" width="1.90" height="8.15"/><rect x="0.00" y="11.20" width="1.90" height="8.15"/><rect x="8.60" y="1.65" width="1.90" height="8.15"/><rect x="8.60" y="11.20" width="1.90" height="8.15"/><rect x="14.25" y="0.00" width="7.20" height="1.90"/><rect x="14.25" y="19.10" width="7.20" height="1.90"/><rect x="12.60" y="1.65" width="1.90" height="8.15"/><rect x="12.60" y="11.20" width="1.90" height="8.15"/><rect x="21.20" y="1.65" width="1.90" height="8.15"/><rect x="21.20" y="11.20" width="1.90" height="8.15"/><rect x="25.10" y="4.62" width="2.00" height="4.20"/><rect x="25.10" y="13.02" width="2.00" height="4.20"/><rect x="30.75" y="0.00" width="7.20" height="1.90"/><rect x="30.75" y="19.10" width="7.20" height="1.90"/><rect x="29.10" y="1.65" width="1.90" height="8.15"/><rect x="29.10" y="11.20" width="1.90" height="8.15"/><rect x="37.70" y="1.65" width="1.90" height="8.15"/><rect x="37.70" y="11.20" width="1.90" height="8.15"/><rect x="43.35" y="0.00" width="7.20" height="1.90"/><rect x="43.35" y="19.10" width="7.20" height="1.90"/><rect x="41.70" y="1.65" width="1.90" height="8.15"/><rect x="41.70" y="11.20" width="1.90" height="8.15"/><rect x="50.30" y="1.65" width="1.90" height="8.15"/><rect x="50.30" y="11.20" width="1.90" height="8.15"/><rect x="54.20" y="4.62" width="2.00" height="4.20"/><rect x="54.20" y="13.02" width="2.00" height="4.20"/><rect x="59.85" y="0.00" width="7.20" height="1.90"/><rect x="59.85" y="19.10" width="7.20" height="1.90"/><rect x="58.20" y="1.65" width="1.90" height="8.15"/><rect x="58.20" y="11.20" width="1.90" height="8.15"/><rect x="66.80" y="1.65" width="1.90" height="8.15"/><rect x="66.80" y="11.20" width="1.90" height="8.15"/><rect x="72.45" y="0.00" width="7.20" height="1.90"/><rect x="72.45" y="19.10" width="7.20" height="1.90"/><rect x="70.80" y="1.65" width="1.90" height="8.15"/><rect x="70.80" y="11.20" width="1.90" height="8.15"/><rect x="79.40" y="1.65" width="1.90" height="8.15"/><rect x="79.40" y="11.20" width="1.90" height="8.15"/><rect x="83.30" y="4.62" width="2.00" height="4.20"/><rect x="83.30" y="13.02" width="2.00" height="4.20"/><rect x="88.95" y="0.00" width="7.20" height="1.90"/><rect x="88.95" y="19.10" width="7.20" height="1.90"/><rect x="87.30" y="1.65" width="1.90" height="8.15"/><rect x="87.30" y="11.20" width="1.90" height="8.15"/><rect x="95.90" y="1.65" width="1.90" height="8.15"/><rect x="95.90" y="11.20" width="1.90" height="8.15"/><rect x="101.55" y="0.00" width="7.20" height="1.90"/><rect x="101.55" y="19.10" width="7.20" height="1.90"/><rect x="99.90" y="1.65" width="1.90" height="8.15"/><rect x="99.90" y="11.20" width="1.90" height="8.15"/><rect x="108.50" y="1.65" width="1.90" height="8.15"/><rect x="108.50" y="11.20" width="1.90" height="8.15"/></g></svg>
<div class="a" style="left:653px;top:393px;white-space:nowrap;font-size:11px;color:#f0f0f0">Current :</div>
<div class="a" style="left:653px;top:408px;width:121px;height:35px;background:#2c2c2c;border-radius:3px"></div>
<svg class="a" style="left:658.3px;top:415px" width="112" height="22"><g fill="#fff"><rect x="1.65" y="0.00" width="7.20" height="1.90"/><rect x="1.65" y="19.10" width="7.20" height="1.90"/><rect x="0.00" y="1.65" width="1.90" height="8.15"/><rect x="0.00" y="11.20" width="1.90" height="8.15"/><rect x="8.60" y="1.65" width="1.90" height="8.15"/><rect x="8.60" y="11.20" width="1.90" height="8.15"/><rect x="14.25" y="0.00" width="7.20" height="1.90"/><rect x="14.25" y="19.10" width="7.20" height="1.90"/><rect x="12.60" y="1.65" width="1.90" height="8.15"/><rect x="12.60" y="11.20" width="1.90" height="8.15"/><rect x="21.20" y="1.65" width="1.90" height="8.15"/><rect x="21.20" y="11.20" width="1.90" height="8.15"/><rect x="25.10" y="4.62" width="2.00" height="4.20"/><rect x="25.10" y="13.02" width="2.00" height="4.20"/><rect x="30.75" y="0.00" width="7.20" height="1.90"/><rect x="30.75" y="19.10" width="7.20" height="1.90"/><rect x="29.10" y="1.65" width="1.90" height="8.15"/><rect x="29.10" y="11.20" width="1.90" height="8.15"/><rect x="37.70" y="1.65" width="1.90" height="8.15"/><rect x="37.70" y="11.20" width="1.90" height="8.15"/><rect x="43.35" y="0.00" width="7.20" height="1.90"/><rect x="43.35" y="19.10" width="7.20" height="1.90"/><rect x="41.70" y="1.65" width="1.90" height="8.15"/><rect x="41.70" y="11.20" width="1.90" height="8.15"/><rect x="50.30" y="1.65" width="1.90" height="8.15"/><rect x="50.30" y="11.20" width="1.90" height="8.15"/><rect x="54.20" y="4.62" width="2.00" height="4.20"/><rect x="54.20" y="13.02" width="2.00" height="4.20"/><rect x="59.85" y="9.55" width="7.20" height="1.90"/><rect x="58.20" y="1.65" width="1.90" height="8.15"/><rect x="66.80" y="1.65" width="1.90" height="8.15"/><rect x="66.80" y="11.20" width="1.90" height="8.15"/><rect x="72.45" y="0.00" width="7.20" height="1.90"/><rect x="72.45" y="19.10" width="7.20" height="1.90"/><rect x="70.80" y="1.65" width="1.90" height="8.15"/><rect x="70.80" y="11.20" width="1.90" height="8.15"/><rect x="79.40" y="1.65" width="1.90" height="8.15"/><rect x="79.40" y="11.20" width="1.90" height="8.15"/><rect x="83.30" y="4.62" width="2.00" height="4.20"/><rect x="83.30" y="13.02" width="2.00" height="4.20"/><rect x="88.95" y="0.00" width="7.20" height="1.90"/><rect x="88.95" y="19.10" width="7.20" height="1.90"/><rect x="88.95" y="9.55" width="7.20" height="1.90"/><rect x="95.90" y="1.65" width="1.90" height="8.15"/><rect x="95.90" y="11.20" width="1.90" height="8.15"/><rect x="101.55" y="0.00" width="7.20" height="1.90"/><rect x="101.55" y="19.10" width="7.20" height="1.90"/><rect x="101.55" y="9.55" width="7.20" height="1.90"/><rect x="99.90" y="11.20" width="1.90" height="8.15"/><rect x="108.50" y="1.65" width="1.90" height="8.15"/></g></svg>
<div class="a" style="left:1050px;top:393px;white-space:nowrap;font-size:11px;color:#f0f0f0">Edited Length :</div>
<div class="a" style="left:1050px;top:408px;width:121px;height:35px;background:#2c2c2c;border-radius:3px"></div>
<svg class="a" style="left:1055.3px;top:415px" width="112" height="22"><g fill="#fff"><rect x="1.65" y="0.00" width="7.20" height="1.90"/><rect x="1.65" y="19.10" width="7.20" height="1.90"/><rect x="0.00" y="1.65" width="1.90" height="8.15"/><rect x="0.00" y="11.20" width="1.90" height="8.15"/><rect x="8.60" y="1.65" width="1.90" height="8.15"/><rect x="8.60" y="11.20" width="1.90" height="8.15"/><rect x="14.25" y="0.00" width="7.20" height="1.90"/><rect x="14.25" y="19.10" width="7.20" height="1.90"/><rect x="12.60" y="1.65" width="1.90" height="8.15"/><rect x="12.60" y="11.20" width="1.90" height="8.15"/><rect x="21.20" y="1.65" width="1.90" height="8.15"/><rect x="21.20" y="11.20" width="1.90" height="8.15"/><rect x="25.10" y="4.62" width="2.00" height="4.20"/><rect x="25.10" y="13.02" width="2.00" height="4.20"/><rect x="37.70" y="1.65" width="1.90" height="8.15"/><rect x="37.70" y="11.20" width="1.90" height="8.15"/><rect x="43.35" y="0.00" width="7.20" height="1.90"/><rect x="43.35" y="19.10" width="7.20" height="1.90"/><rect x="41.70" y="1.65" width="1.90" height="8.15"/><rect x="41.70" y="11.20" width="1.90" height="8.15"/><rect x="50.30" y="1.65" width="1.90" height="8.15"/><rect x="50.30" y="11.20" width="1.90" height="8.15"/><rect x="54.20" y="4.62" width="2.00" height="4.20"/><rect x="54.20" y="13.02" width="2.00" height="4.20"/><rect x="59.85" y="0.00" width="7.20" height="1.90"/><rect x="59.85" y="19.10" width="7.20" height="1.90"/><rect x="59.85" y="9.55" width="7.20" height="1.90"/><rect x="58.20" y="11.20" width="1.90" height="8.15"/><rect x="66.80" y="1.65" width="1.90" height="8.15"/><rect x="72.45" y="0.00" width="7.20" height="1.90"/><rect x="72.45" y="19.10" width="7.20" height="1.90"/><rect x="72.45" y="9.55" width="7.20" height="1.90"/><rect x="70.80" y="1.65" width="1.90" height="8.15"/><rect x="70.80" y="11.20" width="1.90" height="8.15"/><rect x="79.40" y="11.20" width="1.90" height="8.15"/><rect x="83.30" y="4.62" width="2.00" height="4.20"/><rect x="83.30" y="13.02" width="2.00" height="4.20"/><rect x="88.95" y="9.55" width="7.20" height="1.90"/><rect x="87.30" y="1.65" width="1.90" height="8.15"/><rect x="95.90" y="1.65" width="1.90" height="8.15"/><rect x="95.90" y="11.20" width="1.90" height="8.15"/><rect x="101.55" y="0.00" width="7.20" height="1.90"/><rect x="108.50" y="1.65" width="1.90" height="8.15"/><rect x="108.50" y="11.20" width="1.90" height="8.15"/></g></svg>
<div class="a" style="left:1296px;top:589px;white-space:nowrap;font-size:11px;color:#f0f0f0">Before Blue</div>
<div class="a" style="left:1297px;top:603px;width:120px;height:35px;background:#2c2c2c;border-radius:3px"></div>
<svg class="a" style="left:1301.8px;top:610px" width="112" height="22"><g fill="#fff"><rect x="1.65" y="0.00" width="7.20" height="1.90"/><rect x="1.65" y="19.10" width="7.20" height="1.90"/><rect x="0.00" y="1.65" width="1.90" height="8.15"/><rect x="0.00" y="11.20" width="1.90" height="8.15"/><rect x="8.60" y="1.65" width="1.90" height="8.15"/><rect x="8.60" y="11.20" width="1.90" height="8.15"/><rect x="14.25" y="0.00" width="7.20" height="1.90"/><rect x="14.25" y="19.10" width="7.20" height="1.90"/><rect x="12.60" y="1.65" width="1.90" height="8.15"/><rect x="12.60" y="11.20" width="1.90" height="8.15"/><rect x="21.20" y="1.65" width="1.90" height="8.15"/><rect x="21.20" y="11.20" width="1.90" height="8.15"/><rect x="25.10" y="4.62" width="2.00" height="4.20"/><rect x="25.10" y="13.02" width="2.00" height="4.20"/><rect x="30.75" y="0.00" width="7.20" height="1.90"/><rect x="30.75" y="19.10" width="7.20" height="1.90"/><rect x="29.10" y="1.65" width="1.90" height="8.15"/><rect x="29.10" y="11.20" width="1.90" height="8.15"/><rect x="37.70" y="1.65" width="1.90" height="8.15"/><rect x="37.70" y="11.20" width="1.90" height="8.15"/><rect x="43.35" y="0.00" width="7.20" height="1.90"/><rect x="43.35" y="19.10" width="7.20" height="1.90"/><rect x="41.70" y="1.65" width="1.90" height="8.15"/><rect x="41.70" y="11.20" width="1.90" height="8.15"/><rect x="50.30" y="1.65" width="1.90" height="8.15"/><rect x="50.30" y="11.20" width="1.90" height="8.15"/><rect x="54.20" y="4.62" width="2.00" height="4.20"/><rect x="54.20" y="13.02" width="2.00" height="4.20"/><rect x="59.85" y="0.00" width="7.20" height="1.90"/><rect x="59.85" y="19.10" width="7.20" height="1.90"/><rect x="58.20" y="1.65" width="1.90" height="8.15"/><rect x="58.20" y="11.20" width="1.90" height="8.15"/><rect x="66.80" y="1.65" width="1.90" height="8.15"/><rect x="66.80" y="11.20" width="1.90" height="8.15"/><rect x="72.45" y="0.00" width="7.20" height="1.90"/><rect x="72.45" y="19.10" width="7.20" height="1.90"/><rect x="70.80" y="1.65" width="1.90" height="8.15"/><rect x="70.80" y="11.20" width="1.90" height="8.15"/><rect x="79.40" y="1.65" width="1.90" height="8.15"/><rect x="79.40" y="11.20" width="1.90" height="8.15"/><rect x="83.30" y="4.62" width="2.00" height="4.20"/><rect x="83.30" y="13.02" width="2.00" height="4.20"/><rect x="88.95" y="0.00" width="7.20" height="1.90"/><rect x="88.95" y="19.10" width="7.20" height="1.90"/><rect x="87.30" y="1.65" width="1.90" height="8.15"/><rect x="87.30" y="11.20" width="1.90" height="8.15"/><rect x="95.90" y="1.65" width="1.90" height="8.15"/><rect x="95.90" y="11.20" width="1.90" height="8.15"/><rect x="101.55" y="0.00" width="7.20" height="1.90"/><rect x="101.55" y="19.10" width="7.20" height="1.90"/><rect x="99.90" y="1.65" width="1.90" height="8.15"/><rect x="99.90" y="11.20" width="1.90" height="8.15"/><rect x="108.50" y="1.65" width="1.90" height="8.15"/><rect x="108.50" y="11.20" width="1.90" height="8.15"/></g></svg>
<svg class="a" style="left:1333px;top:334px" width="19" height="121"><rect x="0" y="0" width="19" height="2" fill="#d01818"/><rect x="0" y="2" width="19" height="1" fill="#701010"/><rect x="0" y="3" width="19" height="2" fill="#d01818"/><rect x="0" y="5" width="19" height="1" fill="#701010"/><rect x="0" y="6" width="19" height="2" fill="#d01818"/><rect x="0" y="8" width="19" height="1" fill="#701010"/><rect x="0" y="9" width="19" height="2" fill="#d01818"/><rect x="0" y="11" width="19" height="1" fill="#701010"/><rect x="0" y="12" width="19" height="2" fill="#d01818"/><rect x="0" y="14" width="19" height="1" fill="#701010"/><rect x="0" y="15" width="19" height="2" fill="#d01818"/><rect x="0" y="17" width="19" height="1" fill="#701010"/><rect x="0" y="18" width="19" height="2" fill="#d01818"/><rect x="0" y="20" width="19" height="1" fill="#701010"/><rect x="0" y="21" width="19" height="2" fill="#d01818"/><rect x="0" y="23" width="19" height="1" fill="#701010"/><rect x="0" y="24" width="19" height="2" fill="#d01818"/><rect x="0" y="26" width="19" height="1" fill="#701010"/><rect x="0" y="27" width="19" height="2" fill="#d01818"/><rect x="0" y="29" width="19" height="1" fill="#701010"/><rect x="0" y="30" width="19" height="2" fill="#5a5a5a"/><rect x="0" y="32" width="19" height="1" fill="#7a7a7a"/><rect x="0" y="33" width="19" height="2" fill="#5a5a5a"/><rect x="0" y="35" width="19" height="1" fill="#7a7a7a"/><rect x="0" y="36" width="19" height="2" fill="#5a5a5a"/><rect x="0" y="38" width="19" height="1" fill="#7a7a7a"/><rect x="0" y="39" width="19" height="2" fill="#5a5a5a"/><rect x="0" y="41" width="19" height="1" fill="#7a7a7a"/><rect x="0" y="42" width="19" height="2" fill="#5a5a5a"/><rect x="0" y="44" width="19" height="1" fill="#7a7a7a"/><rect x="0" y="45" width="19" height="2" fill="#5a5a5a"/><rect x="0" y="47" width="19" height="1" fill="#7a7a7a"/><rect x="0" y="48" width="19" height="2" fill="#5a5a5a"/><rect x="0" y="50" width="19" height="1" fill="#7a7a7a"/><rect x="0" y="51" width="19" height="2" fill="#5a5a5a"/><rect x="0" y="53" width="19" height="1" fill="#7a7a7a"/><rect x="0" y="54" width="19" height="2" fill="#5a5a5a"/><rect x="0" y="56" width="19" height="1" fill="#7a7a7a"/><rect x="0" y="57" width="19" height="2" fill="#5a5a5a"/><rect x="0" y="59" width="19" height="1" fill="#7a7a7a"/><rect x="0" y="60" width="19" height="2" fill="#5a5a5a"/><rect x="0" y="62" width="19" height="1" fill="#7a7a7a"/><rect x="0" y="63" width="19" height="2" fill="#5a5a5a"/><rect x="0" y="65" width="19" height="1" fill="#7a7a7a"/><rect x="0" y="66" width="19" height="2" fill="#5a5a5a"/><rect x="0" y="68" width="19" height="1" fill="#7a7a7a"/><rect x="0" y="69" width="19" height="2" fill="#5a5a5a"/><rect x="0" y="71" width="19" height="1" fill="#7a7a7a"/><rect x="0" y="72" width="19" height="2" fill="#5a5a5a"/><rect x="0" y="74" width="19" height="1" fill="#7a7a7a"/><rect x="0" y="75" width="19" height="2" fill="#5a5a5a"/><rect x="0" y="77" width="19" height="1" fill="#7a7a7a"/><rect x="0" y="78" width="19" height="2" fill="#5a5a5a"/><rect x="0" y="80" width="19" height="1" fill="#7a7a7a"/><rect x="0" y="81" width="19" height="2" fill="#5a5a5a"/><rect x="0" y="83" width="19" height="1" fill="#7a7a7a"/><rect x="0" y="84" width="19" height="2" fill="#5a5a5a"/><rect x="0" y="86" width="19" height="1" fill="#7a7a7a"/><rect x="0" y="87" width="19" height="2" fill="#5a5a5a"/><rect x="0" y="89" width="19" height="1" fill="#7a7a7a"/><rect x="0" y="90" width="19" height="2" fill="#5a5a5a"/><rect x="0" y="92" width="19" height="1" fill="#7a7a7a"/><rect x="0" y="93" width="19" height="2" fill="#5a5a5a"/><rect x="0" y="95" width="19" height="1" fill="#7a7a7a"/><rect x="0" y="96" width="19" height="2" fill="#5a5a5a"/><rect x="0" y="98" width="19" height="1" fill="#7a7a7a"/><rect x="0" y="99" width="19" height="2" fill="#5a5a5a"/><rect x="0" y="101" width="19" height="1" fill="#7a7a7a"/><rect x="0" y="102" width="19" height="2" fill="#5a5a5a"/><rect x="0" y="104" width="19" height="1" fill="#7a7a7a"/><rect x="0" y="105" width="19" height="2" fill="#5a5a5a"/><rect x="0" y="107" width="19" height="1" fill="#7a7a7a"/><rect x="0" y="108" width="19" height="2" fill="#5a5a5a"/><rect x="0" y="110" width="19" height="1" fill="#7a7a7a"/><rect x="0" y="111" width="19" height="2" fill="#5a5a5a"/><rect x="0" y="113" width="19" height="1" fill="#7a7a7a"/><rect x="0" y="116" width="19" height="4" fill="#d01818"/></svg>
<svg class="a" style="left:1390px;top:334px" width="19" height="121"><rect x="0" y="0" width="19" height="2" fill="#d01818"/><rect x="0" y="2" width="19" height="1" fill="#701010"/><rect x="0" y="3" width="19" height="2" fill="#d01818"/><rect x="0" y="5" width="19" height="1" fill="#701010"/><rect x="0" y="6" width="19" height="2" fill="#d01818"/><rect x="0" y="8" width="19" height="1" fill="#701010"/><rect x="0" y="9" width="19" height="2" fill="#d01818"/><rect x="0" y="11" width="19" height="1" fill="#701010"/><rect x="0" y="12" width="19" height="2" fill="#d01818"/><rect x="0" y="14" width="19" height="1" fill="#701010"/><rect x="0" y="15" width="19" height="2" fill="#d01818"/><rect x="0" y="17" width="19" height="1" fill="#701010"/><rect x="0" y="18" width="19" height="2" fill="#d01818"/><rect x="0" y="20" width="19" height="1" fill="#701010"/><rect x="0" y="21" width="19" height="2" fill="#d01818"/><rect x="0" y="23" width="19" height="1" fill="#701010"/><rect x="0" y="24" width="19" height="2" fill="#d01818"/><rect x="0" y="26" width="19" height="1" fill="#701010"/><rect x="0" y="27" width="19" height="2" fill="#d01818"/><rect x="0" y="29" width="19" height="1" fill="#701010"/><rect x="0" y="30" width="19" height="2" fill="#5a5a5a"/><rect x="0" y="32" width="19" height="1" fill="#7a7a7a"/><rect x="0" y="33" width="19" height="2" fill="#5a5a5a"/><rect x="0" y="35" width="19" height="1" fill="#7a7a7a"/><rect x="0" y="36" width="19" height="2" fill="#5a5a5a"/><rect x="0" y="38" width="19" height="1" fill="#7a7a7a"/><rect x="0" y="39" width="19" height="2" fill="#5a5a5a"/><rect x="0" y="41" width="19" height="1" fill="#7a7a7a"/><rect x="0" y="42" width="19" height="2" fill="#5a5a5a"/><rect x="0" y="44" width="19" height="1" fill="#7a7a7a"/><rect x="0" y="45" width="19" height="2" fill="#5a5a5a"/><rect x="0" y="47" width="19" height="1" fill="#7a7a7a"/><rect x="0" y="48" width="19" height="2" fill="#5a5a5a"/><rect x="0" y="50" width="19" height="1" fill="#7a7a7a"/><rect x="0" y="51" width="19" height="2" fill="#5a5a5a"/><rect x="0" y="53" width="19" height="1" fill="#7a7a7a"/><rect x="0" y="54" width="19" height="2" fill="#5a5a5a"/><rect x="0" y="56" width="19" height="1" fill="#7a7a7a"/><rect x="0" y="57" width="19" height="2" fill="#5a5a5a"/><rect x="0" y="59" width="19" height="1" fill="#7a7a7a"/><rect x="0" y="60" width="19" height="2" fill="#5a5a5a"/><rect x="0" y="62" width="19" height="1" fill="#7a7a7a"/><rect x="0" y="63" width="19" height="2" fill="#5a5a5a"/><rect x="0" y="65" width="19" height="1" fill="#7a7a7a"/><rect x="0" y="66" width="19" height="2" fill="#5a5a5a"/><rect x="0" y="68" width="19" height="1" fill="#7a7a7a"/><rect x="0" y="69" width="19" height="2" fill="#5a5a5a"/><rect x="0" y="71" width="19" height="1" fill="#7a7a7a"/><rect x="0" y="72" width="19" height="2" fill="#5a5a5a"/><rect x="0" y="74" width="19" height="1" fill="#7a7a7a"/><rect x="0" y="75" width="19" height="2" fill="#5a5a5a"/><rect x="0" y="77" width="19" height="1" fill="#7a7a7a"/><rect x="0" y="78" width="19" height="2" fill="#5a5a5a"/><rect x="0" y="80" width="19" height="1" fill="#7a7a7a"/><rect x="0" y="81" width="19" height="2" fill="#5a5a5a"/><rect x="0" y="83" width="19" height="1" fill="#7a7a7a"/><rect x="0" y="84" width="19" height="2" fill="#5a5a5a"/><rect x="0" y="86" width="19" height="1" fill="#7a7a7a"/><rect x="0" y="87" width="19" height="2" fill="#5a5a5a"/><rect x="0" y="89" width="19" height="1" fill="#7a7a7a"/><rect x="0" y="90" width="19" height="2" fill="#5a5a5a"/><rect x="0" y="92" width="19" height="1" fill="#7a7a7a"/><rect x="0" y="93" width="19" height="2" fill="#5a5a5a"/><rect x="0" y="95" width="19" height="1" fill="#7a7a7a"/><rect x="0" y="96" width="19" height="2" fill="#5a5a5a"/><rect x="0" y="98" width="19" height="1" fill="#7a7a7a"/><rect x="0" y="99" width="19" height="2" fill="#5a5a5a"/><rect x="0" y="101" width="19" height="1" fill="#7a7a7a"/><rect x="0" y="102" width="19" height="2" fill="#5a5a5a"/><rect x="0" y="104" width="19" height="1" fill="#7a7a7a"/><rect x="0" y="105" width="19" height="2" fill="#5a5a5a"/><rect x="0" y="107" width="19" height="1" fill="#7a7a7a"/><rect x="0" y="108" width="19" height="2" fill="#5a5a5a"/><rect x="0" y="110" width="19" height="1" fill="#7a7a7a"/><rect x="0" y="111" width="19" height="2" fill="#5a5a5a"/><rect x="0" y="113" width="19" height="1" fill="#7a7a7a"/><rect x="0" y="116" width="19" height="4" fill="#d01818"/></svg>
<div class="a" style="left:1356px;top:330px;white-space:nowrap;font-size:11px;color:#eee">-</div>
<div class="a" style="left:1384px;top:330px;white-space:nowrap;font-size:11px;color:#eee">-</div>
<div class="a" style="left:1365px;top:330px;white-space:nowrap;font-size:11px;color:#f0f0f0">+9</div>
<div class="a" style="left:1356px;top:355px;white-space:nowrap;font-size:11px;color:#eee">-</div>
<div class="a" style="left:1384px;top:355px;white-space:nowrap;font-size:11px;color:#eee">-</div>
<div class="a" style="left:1368px;top:355px;white-space:nowrap;font-size:11px;color:#f0f0f0">0</div>
<div class="a" style="left:1356px;top:446px;white-space:nowrap;font-size:11px;color:#eee">-</div>
<div class="a" style="left:1384px;top:446px;white-space:nowrap;font-size:11px;color:#eee">-</div>
<div class="a" style="left:1363px;top:446px;white-space:nowrap;font-size:11px;color:#f0f0f0">-30</div>
<svg class="a" style="left:1333px;top:471px" width="21" height="96"><rect x="9" y="0" width="2" height="95" fill="#222"/><rect x="11" y="0" width="1" height="95" fill="#aaa"/><rect x="3" y="5" width="14" height="1" fill="#222"/><rect x="3" y="14" width="14" height="1" fill="#222"/><rect x="3" y="22" width="14" height="1" fill="#222"/><rect x="3" y="32" width="14" height="1" fill="#222"/><rect x="3" y="42" width="14" height="1" fill="#222"/><rect x="3" y="52" width="14" height="1" fill="#222"/><rect x="3" y="62" width="14" height="1" fill="#222"/><rect x="3" y="72" width="14" height="1" fill="#222"/><rect x="3" y="82" width="14" height="1" fill="#222"/><rect x="3" y="92" width="14" height="1" fill="#222"/><rect x="0" y="17" width="21" height="14" rx="7" fill="#111"/><rect x="5" y="23" width="11" height="2.5" rx="1" fill="#f0b020"/></svg>
<svg class="a" style="left:1389px;top:471px" width="21" height="96"><rect x="9" y="0" width="2" height="95" fill="#222"/><rect x="11" y="0" width="1" height="95" fill="#aaa"/><rect x="3" y="5" width="14" height="1" fill="#222"/><rect x="3" y="14" width="14" height="1" fill="#222"/><rect x="3" y="22" width="14" height="1" fill="#222"/><rect x="3" y="32" width="14" height="1" fill="#222"/><rect x="3" y="42" width="14" height="1" fill="#222"/><rect x="3" y="52" width="14" height="1" fill="#222"/><rect x="3" y="62" width="14" height="1" fill="#222"/><rect x="3" y="72" width="14" height="1" fill="#222"/><rect x="3" y="82" width="14" height="1" fill="#222"/><rect x="3" y="92" width="14" height="1" fill="#222"/><rect x="0" y="17" width="21" height="14" rx="7" fill="#111"/><rect x="5" y="23" width="11" height="2.5" rx="1" fill="#f0b020"/></svg>
<svg class="a" style="left:1361px;top:543px" width="21" height="25"><path d="M5 11V7a5.5 5.5 0 0 1 11 0v4" stroke="#ddd" stroke-width="2.4" fill="none"/><rect x="1" y="11" width="19" height="13" rx="1" fill="#e0b020"/><rect x="1" y="11" width="19" height="3" fill="#f0d060"/></svg>
<svg class="a" style="left:47px;top:832px;filter:drop-shadow(1px 1px 0 #151515)" width="14" height="16"><path d="M1 1l7 6.5L1 14z" fill="#eee" stroke="#333" stroke-width=".6"/><rect x="9" y="0" width="4" height="16" fill="#28ecf4"/></svg>
<svg class="a" style="left:88px;top:832px;filter:drop-shadow(1px 1px 0 #151515)" width="14" height="16"><rect x="0" y="0" width="5" height="16" fill="#f6ee14"/><path d="M6 1l7 6.5L6 14z" fill="#eee" stroke="#333" stroke-width=".6"/></svg>
<svg class="a" style="left:125px;top:832px;filter:drop-shadow(1px 1px 0 #151515)" width="18" height="16"><path d="M0 3l4 4.5L0 12z" fill="#eee"/><rect x="5" y="0" width="3" height="16" fill="#28ecf4"/><rect x="9" y="0" width="3" height="16" fill="#f6ee14"/><path d="M13 3l4 4.5L13 12z" fill="#eee"/></svg>
<svg class="a" style="left:166px;top:832px;filter:drop-shadow(1px 1px 0 #151515)" width="19" height="16"><rect x="0" y="0" width="4" height="16" fill="#28ecf4"/><path d="M5 1l7 6.5L5 14z" fill="#eee" stroke="#333" stroke-width=".6"/><rect x="14" y="0" width="4" height="16" fill="#f6ee14"/></svg>
<svg class="a" style="left:229px;top:830px;filter:drop-shadow(1px 1px 0 #151515)" width="12" height="19"><path d="M1 1h4v16" stroke="#222" fill="none"/><path d="M6 10l5 4-5 4z" fill="#28ecf4"/></svg>
<svg class="a" style="left:266px;top:830px;filter:drop-shadow(1px 1px 0 #151515)" width="12" height="19"><path d="M11 1H7v16" stroke="#222" fill="none"/><path d="M6 10l-5 4 5 4z" fill="#f6ee14"/></svg>
<svg class="a" style="left:326px;top:829px;filter:drop-shadow(1px 1px 0 #151515)" width="19" height="20"><path d="M3.5 .5l6 10.5M14.5 .5l-6 10.5" stroke="#111" stroke-width="3"/><path d="M3.5 .5l6 10.5M14.5 .5l-6 10.5" stroke="#fafafa" stroke-width="1.6"/><circle cx="5" cy="15" r="3.3" fill="none" stroke="#111" stroke-width="3"/><circle cx="13" cy="15" r="3.3" fill="none" stroke="#111" stroke-width="3"/><circle cx="5" cy="15" r="3.3" fill="none" stroke="#f05050" stroke-width="1.6"/><circle cx="13" cy="15" r="3.3" fill="none" stroke="#f05050" stroke-width="1.6"/></svg>
<svg class="a" style="left:366px;top:829px;filter:drop-shadow(1px 1px 0 #151515)" width="19" height="20"><path d="M7 .5h4v11H7z" fill="#fafafa" stroke="#111" stroke-width="1"/><path d="M9 1v10" stroke="#999" stroke-width=".6"/><circle cx="5" cy="15" r="3.3" fill="none" stroke="#111" stroke-width="3"/><circle cx="13" cy="15" r="3.3" fill="none" stroke="#111" stroke-width="3"/><circle cx="5" cy="15" r="3.3" fill="none" stroke="#e0a040" stroke-width="1.6"/><circle cx="13" cy="15" r="3.3" fill="none" stroke="#e0a040" stroke-width="1.6"/></svg>
<svg class="a" style="left:407px;top:830px;filter:drop-shadow(1px 1px 0 #151515)" width="16" height="18"><rect x=".5" y=".5" width="8" height="10" fill="#fff" stroke="#222"/><rect x="5.5" y="5.5" width="9" height="11" fill="#fff" stroke="#222"/><path d="M7 9h6M7 11h6M7 13h6" stroke="#66c"/></svg>
<svg class="a" style="left:446px;top:829px;filter:drop-shadow(1px 1px 0 #151515)" width="18" height="20"><rect x=".5" y="3.5" width="14" height="14" fill="#d8d890" stroke="#222"/><rect x="4" y="0" width="7" height="5" rx="1" fill="#d0d060" stroke="#222"/><rect x="6.5" y="7.5" width="10" height="11" fill="#fff" stroke="#222"/><path d="M8 11h7M8 13h7M8 15h7" stroke="#6060c0"/></svg>
<svg class="a" style="left:223px;top:866px" width="8" height="12"><path d="M7 .5L.8 6 7 11.5z" fill="#28ecf4" stroke="#111" stroke-width=".9"/></svg>
<svg class="a" style="left:244px;top:866px" width="8" height="12"><path d="M.8 .5L7 6 .8 11.5z" fill="#28ecf4" stroke="#111" stroke-width=".9"/></svg>
<svg class="a" style="left:263px;top:866px" width="8" height="12"><path d="M7 .5L.8 6 7 11.5z" fill="#f6ee14" stroke="#111" stroke-width=".9"/></svg>
<svg class="a" style="left:284px;top:866px" width="8" height="12"><path d="M.8 .5L7 6 .8 11.5z" fill="#f6ee14" stroke="#111" stroke-width=".9"/></svg>
<div class="a" style="left:497px;top:810px;width:180px;height:47px;background:linear-gradient(#686868,#3a3a3a 40%,#151515 75%,#050505)"></div>
<div class="a" style="left:497px;top:808px;white-space:nowrap;font-size:11px;color:#f4f4f4">Speed : 0 %</div>
<svg class="a" style="left:577px;top:823px" width="21" height="11"><path d="M1 1h19L10.5 10z" fill="#d8a810" stroke="#806010" stroke-width=".8"/><path d="M3 1.5h15" stroke="#f8e070" stroke-width="1.5"/></svg>
<svg class="a" style="left:500.6px;top:835px" width="4" height="4"><path d="M2 0v4M0 2h4" stroke="#fff" stroke-width="1"/></svg>
<div class="a" style="left:499px;top:843px;white-space:nowrap;font-size:11.5px;color:#f4f4f4">-200</div>
<svg class="a" style="left:542.5px;top:835px" width="4" height="4"><path d="M2 0v4M0 2h4" stroke="#fff" stroke-width="1"/></svg>
<div class="a" style="left:534px;top:843px;white-space:nowrap;font-size:11.5px;color:#f4f4f4">-100</div>
<svg class="a" style="left:585.5px;top:835px" width="4" height="4"><path d="M2 0v4M0 2h4" stroke="#fff" stroke-width="1"/></svg>
<div class="a" style="left:584px;top:843px;white-space:nowrap;font-size:11.5px;color:#f4f4f4">0</div>
<svg class="a" style="left:627.4px;top:835px" width="4" height="4"><path d="M2 0v4M0 2h4" stroke="#fff" stroke-width="1"/></svg>
<div class="a" style="left:621px;top:843px;white-space:nowrap;font-size:11.5px;color:#f4f4f4">100</div>
<svg class="a" style="left:670.5px;top:835px" width="4" height="4"><path d="M2 0v4M0 2h4" stroke="#fff" stroke-width="1"/></svg>
<div class="a" style="left:657px;top:843px;white-space:nowrap;font-size:11.5px;color:#f4f4f4">200</div>
<svg class="a" style="left:625px;top:839px" width="9" height="6"><path d="M0 5.5h9L4.5 0z" fill="#e8a830"/></svg>
<svg class="a" style="left:709px;top:831px;filter:drop-shadow(1px 1px 0 #151515)" width="14" height="20"><path d="M1.5 1.5l10 8-10 8z" fill="#eee" stroke="#222" stroke-width="1"/></svg>
<svg class="a" style="left:747px;top:829px;filter:drop-shadow(1px 1px 0 #151515)" width="18" height="19"><rect x="1" y="1" width="16" height="16" fill="#f05020" stroke="#701000" stroke-width="1.2"/></svg>
<svg class="a" style="left:786px;top:829px;filter:drop-shadow(1px 1px 0 #151515)" width="16" height="19"><rect x="1" y="1" width="5.5" height="16" fill="#f06030" stroke="#701000"/><rect x="9.5" y="1" width="5.5" height="16" fill="#f06030" stroke="#701000"/></svg>
<svg class="a" style="left:824px;top:830px;filter:drop-shadow(1px 1px 0 #151515)" width="20" height="19"><path d="M10 1L1 9l9 8zM19 1l-9 8 9 8z" fill="#e8e8e8" stroke="#333" stroke-width=".8"/></svg>
<svg class="a" style="left:863px;top:830px;filter:drop-shadow(1px 1px 0 #151515)" width="20" height="19"><path d="M1 1l9 8-9 8zM10 1l9 8-9 8z" fill="#e8e8e8" stroke="#333" stroke-width=".8"/></svg>
<svg class="a" style="left:925px;top:830px;filter:drop-shadow(1px 1px 0 #151515)" width="22" height="19"><rect x="1" y="1" width="3" height="16" fill="#e8e8e8" stroke="#333" stroke-width=".6"/><path d="M13 1L5 9l8 8zM21 1l-8 8 8 8z" fill="#e8e8e8" stroke="#333" stroke-width=".8"/></svg>
<svg class="a" style="left:963px;top:830px;filter:drop-shadow(1px 1px 0 #151515)" width="22" height="19"><path d="M1 1l8 8-8 8zM9 1l8 8-8 8z" fill="#e8e8e8" stroke="#333" stroke-width=".8"/><rect x="18" y="1" width="3" height="16" fill="#e8e8e8" stroke="#333" stroke-width=".6"/></svg>
<svg class="a" style="left:767px;top:857px" width="12" height="12"><path d="M1 4h3l4-3v10L4 8H1z" fill="none" stroke="#222"/><path d="M1 11L11 1" stroke="#222"/></svg>
<div class="a" style="left:1253px;top:860px;width:68px;height:22px;background:#5c5c5c;border-radius:3px 3px 0 0"></div>
<div class="a" style="left:1271px;top:865px;white-space:nowrap;font-size:11px;color:#f0f0f0">Effect</div>
<div class="a" style="left:1322px;top:860px;width:68px;height:22px;background:#5c5c5c;border-radius:3px 3px 0 0"></div>
<div class="a" style="left:1348px;top:865px;white-space:nowrap;font-size:11px;color:#f0f0f0">Bin</div>
<div class="a" style="left:1392px;top:860px;width:19px;height:22px;background:#5c5c5c;border-radius:3px 3px 0 0"></div>
<svg class="a" style="left:1396px;top:866px" width="11" height="7"><path d="M0 6h11L5.5 0z" fill="#fff"/></svg><!--/LOWER--><!--TRACKS--><div class="a" style="left:17px;top:458px;width:1277px;height:344px;background:#6e6e6e"></div>
<div class="a" style="left:17px;top:458px;width:1258px;height:2px;background:#b8b8a8"></div>
<div class="a" style="left:17px;top:458px;width:1px;height:343px;background:#b8b8b8"></div>
<div class="a" style="left:17px;top:800px;width:1277px;height:2px;background:#f4f4f4"></div>
<div class="a" style="left:19px;top:460px;width:1256px;height:80px;background:#000"></div>
<div class="a" style="left:21px;top:461px;width:157px;height:78px;background:#d9738e"></div>
<div class="a" style="left:25px;top:466px;width:80px;height:15px;background:#d8d8d8;border-radius:3px"></div>
<div class="a" style="left:29px;top:466px;white-space:nowrap;font-size:11px;line-height:15px;color:#111">Track 1</div>
<div class="a" style="left:112px;top:468px;width:12px;height:12px;background:#d81818;border:1px solid #222;box-shadow:inset -1px -1px 0 #888"></div>
<div class="a" style="left:112px;top:468px;white-space:nowrap;width:12px;text-align:center;font-size:8px;line-height:12px;font-weight:bold;color:#600">R</div>
<div class="a" style="left:128px;top:468px;width:12px;height:12px;background:#d8dcd8;border:1px solid #222;box-shadow:inset -1px -1px 0 #888"></div>
<div class="a" style="left:128px;top:468px;white-space:nowrap;width:12px;text-align:center;font-size:8px;line-height:12px;font-weight:bold;color:#333">S</div>
<div class="a" style="left:144px;top:468px;width:12px;height:12px;background:#d8dcd8;border:1px solid #222;box-shadow:inset -1px -1px 0 #888"></div>
<div class="a" style="left:144px;top:468px;white-space:nowrap;width:12px;text-align:center;font-size:8px;line-height:12px;font-weight:bold;color:#2a5a3a">M</div>
<div class="a" style="left:162px;top:465px;white-space:nowrap;font-size:11px;color:#111">dB</div>
<div class="a" style="left:164px;top:480px;width:3px;height:54px;background:#050505"></div>
<div class="a" style="left:169px;top:480px;width:3px;height:54px;background:#050505"></div>
<div class="a" style="left:163px;top:492px;width:10px;height:1px;background:#222"></div>
<div class="a" style="left:171px;top:529px;white-space:nowrap;font-size:11px;line-height:11px;color:#111">+</div>
<div class="a" style="left:25px;top:496px;width:80px;height:15px;background:#fff;border:1px solid #111"></div>
<div class="a" style="left:29px;top:496px;white-space:nowrap;font-size:11px;line-height:15px;color:#111">Normal</div>
<svg class="a" style="left:95px;top:502px" width="9" height="5"><path d="M0 0h9L4.5 5z" fill="#000"/></svg>
<svg class="a" style="left:110px;top:488px;filter:drop-shadow(1px 1px 1px rgba(0,0,0,.45))" width="34" height="34"><defs><radialGradient id="kn0" cx=".3" cy=".25" r=".85"><stop offset="0" stop-color="#f4e8a0"/><stop offset=".5" stop-color="#e8c848"/><stop offset=".85" stop-color="#c09a18"/><stop offset="1" stop-color="#a07808"/></radialGradient></defs><circle cx="17" cy="17" r="15" fill="url(#kn0)" stroke="#fff4c8" stroke-width="1.5"/><circle cx="24.5" cy="15.0" r="3.3" fill="#3a3a4a"/></svg>
<div class="a" style="left:114px;top:521px;white-space:nowrap;font-size:11px;color:#2a1a1a">-7 dB</div>
<svg class="a" style="left:26px;top:517px" width="16" height="16"><defs><radialGradient id="bt0_26" cx=".35" cy=".3" r=".8"><stop offset="0" stop-color="#fff"/><stop offset=".7" stop-color="#e8e8e8"/><stop offset="1" stop-color="#888"/></radialGradient></defs><circle cx="7.5" cy="7.5" r="7.3" fill="url(#bt0_26)"/><text x="8.5" y="10.5" font-size="7.5" font-weight="bold" text-anchor="middle" fill="#111" font-family="Liberation Sans">Lo</text></svg>
<svg class="a" style="left:46px;top:517px" width="16" height="16"><defs><radialGradient id="bt0_46" cx=".35" cy=".3" r=".8"><stop offset="0" stop-color="#fff"/><stop offset=".7" stop-color="#e8e8e8"/><stop offset="1" stop-color="#888"/></radialGradient></defs><circle cx="7.5" cy="7.5" r="7.3" fill="url(#bt0_46)"/><text x="8.5" y="10.5" font-size="7.5" font-weight="bold" text-anchor="middle" fill="#111" font-family="Liberation Sans">Ro</text></svg>
<svg class="a" style="left:66px;top:517px" width="16" height="16"><defs><radialGradient id="bt0_66" cx=".35" cy=".3" r=".8"><stop offset="0" stop-color="#fff"/><stop offset=".7" stop-color="#e8e8e8"/><stop offset="1" stop-color="#888"/></radialGradient></defs><circle cx="7.5" cy="7.5" r="7.3" fill="url(#bt0_66)"/><text x="8.5" y="10.5" font-size="7.5" font-weight="bold" text-anchor="middle" fill="#111" font-family="Liberation Sans">L/R</text></svg>
<svg class="a" style="left:86px;top:517px" width="16" height="16"><defs><radialGradient id="bt0_86" cx=".35" cy=".3" r=".8"><stop offset="0" stop-color="#fff"/><stop offset=".7" stop-color="#e8e8e8"/><stop offset="1" stop-color="#888"/></radialGradient></defs><circle cx="7.5" cy="7.5" r="7.3" fill="url(#bt0_86)"/><text x="8.5" y="10.5" font-size="7.5" font-weight="bold" text-anchor="middle" fill="#111" font-family="Liberation Sans">R/L</text></svg>
<div class="a" style="left:180px;top:461px;width:251px;height:79px;background:repeating-linear-gradient(-45deg,#d87a96 0 4.6px,#b8607e 4.6px 5.66px)"></div>
<div class="a" style="left:431px;top:460px;width:297px;height:81px;background:#d01010"></div>
<div class="a" style="left:432px;top:461px;width:295px;height:79px;background:#8b5a5f"></div>
<div class="a" style="left:432px;top:461px;width:295px;height:1px;background:#c01818"></div>
<div class="a" style="left:432px;top:539px;width:295px;height:1px;background:#c01818"></div>
<div class="a" style="left:431px;top:460px;width:1px;height:81px;background:#000"></div>
<div class="a" style="left:432px;top:461px;width:2px;height:79px;background:#c81818"></div>
<div class="a" style="left:727px;top:461px;width:2px;height:79px;background:#d8401c"></div>
<div class="a" style="left:729px;top:461px;width:545px;height:79px;background:linear-gradient(#d6718c,#e086a2 45%,#e38aa6 55%,#d6718c)"></div>
<div class="a" style="left:180px;top:500px;width:251px;height:1px;background:#a86040"></div>
<div class="a" style="left:180px;top:501px;width:251px;height:1px;background:#d8987a"></div>
<div class="a" style="left:432px;top:500px;width:295px;height:1px;background:#6a9a30"></div>
<div class="a" style="left:729px;top:500px;width:545px;height:1px;background:#a86040"></div>
<div class="a" style="left:729px;top:501px;width:545px;height:1px;background:#d8967a"></div>
<div class="a" style="left:19px;top:540px;width:1256px;height:80px;background:#000"></div>
<div class="a" style="left:21px;top:541px;width:157px;height:78px;background:#d9738e"></div>
<div class="a" style="left:25px;top:546px;width:80px;height:15px;background:#d8d8d8;border-radius:3px"></div>
<div class="a" style="left:29px;top:546px;white-space:nowrap;font-size:11px;line-height:15px;color:#111">Radio 2</div>
<div class="a" style="left:112px;top:548px;width:12px;height:12px;background:#d81818;border:1px solid #222;box-shadow:inset -1px -1px 0 #888"></div>
<div class="a" style="left:112px;top:548px;white-space:nowrap;width:12px;text-align:center;font-size:8px;line-height:12px;font-weight:bold;color:#600">R</div>
<div class="a" style="left:128px;top:548px;width:12px;height:12px;background:#d8dcd8;border:1px solid #222;box-shadow:inset -1px -1px 0 #888"></div>
<div class="a" style="left:128px;top:548px;white-space:nowrap;width:12px;text-align:center;font-size:8px;line-height:12px;font-weight:bold;color:#333">S</div>
<div class="a" style="left:144px;top:548px;width:12px;height:12px;background:#d8dcd8;border:1px solid #222;box-shadow:inset -1px -1px 0 #888"></div>
<div class="a" style="left:144px;top:548px;white-space:nowrap;width:12px;text-align:center;font-size:8px;line-height:12px;font-weight:bold;color:#2a5a3a">M</div>
<div class="a" style="left:162px;top:545px;white-space:nowrap;font-size:11px;color:#111">dB</div>
<div class="a" style="left:164px;top:560px;width:3px;height:54px;background:#050505"></div>
<div class="a" style="left:169px;top:560px;width:3px;height:54px;background:#050505"></div>
<div class="a" style="left:165px;top:575px;width:1px;height:38px;background:#a0c0a0"></div>
<div class="a" style="left:170px;top:575px;width:1px;height:38px;background:#a0c0a0"></div>
<div class="a" style="left:163px;top:572px;width:10px;height:1px;background:#222"></div>
<div class="a" style="left:171px;top:609px;white-space:nowrap;font-size:11px;line-height:11px;color:#111">+</div>
<div class="a" style="left:25px;top:576px;width:80px;height:15px;background:#fff;border:1px solid #111"></div>
<div class="a" style="left:29px;top:576px;white-space:nowrap;font-size:11px;line-height:15px;color:#111">Normal</div>
<svg class="a" style="left:95px;top:582px" width="9" height="5"><path d="M0 0h9L4.5 5z" fill="#000"/></svg>
<svg class="a" style="left:110px;top:568px;filter:drop-shadow(1px 1px 1px rgba(0,0,0,.45))" width="34" height="34"><defs><radialGradient id="kn1" cx=".3" cy=".25" r=".85"><stop offset="0" stop-color="#f4e8a0"/><stop offset=".5" stop-color="#e8c848"/><stop offset=".85" stop-color="#c09a18"/><stop offset="1" stop-color="#a07808"/></radialGradient></defs><circle cx="17" cy="17" r="15" fill="url(#kn1)" stroke="#fff4c8" stroke-width="1.5"/><circle cx="24.5" cy="16.0" r="3.3" fill="#3a3a4a"/></svg>
<div class="a" style="left:114px;top:601px;white-space:nowrap;font-size:11px;color:#2a1a1a">-2 dB</div>
<svg class="a" style="left:26px;top:597px" width="16" height="16"><defs><radialGradient id="bt1_26" cx=".35" cy=".3" r=".8"><stop offset="0" stop-color="#fff"/><stop offset=".7" stop-color="#e8e8e8"/><stop offset="1" stop-color="#888"/></radialGradient></defs><circle cx="7.5" cy="7.5" r="7.3" fill="url(#bt1_26)"/><text x="8.5" y="10.5" font-size="7.5" font-weight="bold" text-anchor="middle" fill="#111" font-family="Liberation Sans">Lo</text></svg>
<svg class="a" style="left:46px;top:597px" width="16" height="16"><defs><radialGradient id="bt1_46" cx=".35" cy=".3" r=".8"><stop offset="0" stop-color="#fff"/><stop offset=".7" stop-color="#e8e8e8"/><stop offset="1" stop-color="#888"/></radialGradient></defs><circle cx="7.5" cy="7.5" r="7.3" fill="url(#bt1_46)"/><text x="8.5" y="10.5" font-size="7.5" font-weight="bold" text-anchor="middle" fill="#111" font-family="Liberation Sans">Ro</text></svg>
<svg class="a" style="left:66px;top:597px" width="16" height="16"><defs><radialGradient id="bt1_66" cx=".35" cy=".3" r=".8"><stop offset="0" stop-color="#fff"/><stop offset=".7" stop-color="#e8e8e8"/><stop offset="1" stop-color="#888"/></radialGradient></defs><circle cx="7.5" cy="7.5" r="7.3" fill="url(#bt1_66)"/><text x="8.5" y="10.5" font-size="7.5" font-weight="bold" text-anchor="middle" fill="#111" font-family="Liberation Sans">L/R</text></svg>
<svg class="a" style="left:86px;top:597px" width="16" height="16"><defs><radialGradient id="bt1_86" cx=".35" cy=".3" r=".8"><stop offset="0" stop-color="#fff"/><stop offset=".7" stop-color="#e8e8e8"/><stop offset="1" stop-color="#888"/></radialGradient></defs><circle cx="7.5" cy="7.5" r="7.3" fill="url(#bt1_86)"/><text x="8.5" y="10.5" font-size="7.5" font-weight="bold" text-anchor="middle" fill="#111" font-family="Liberation Sans">R/L</text></svg>
<div class="a" style="left:180px;top:541px;width:251px;height:79px;background:repeating-linear-gradient(-45deg,#d87a96 0 4.6px,#b8607e 4.6px 5.66px)"></div>
<div class="a" style="left:431px;top:540px;width:297px;height:81px;background:#d01010"></div>
<div class="a" style="left:432px;top:541px;width:295px;height:79px;background:#8b5a5f"></div>
<div class="a" style="left:432px;top:541px;width:295px;height:1px;background:#c01818"></div>
<div class="a" style="left:432px;top:619px;width:295px;height:1px;background:#c01818"></div>
<div class="a" style="left:431px;top:540px;width:1px;height:81px;background:#000"></div>
<div class="a" style="left:432px;top:541px;width:2px;height:79px;background:#c81818"></div>
<div class="a" style="left:727px;top:541px;width:2px;height:79px;background:#d8401c"></div>
<div class="a" style="left:729px;top:541px;width:545px;height:79px;background:linear-gradient(#d6718c,#e086a2 45%,#e38aa6 55%,#d6718c)"></div>
<div class="a" style="left:180px;top:580px;width:251px;height:1px;background:#a86040"></div>
<div class="a" style="left:180px;top:581px;width:251px;height:1px;background:#d8987a"></div>
<div class="a" style="left:432px;top:580px;width:295px;height:1px;background:#6a9a30"></div>
<div class="a" style="left:729px;top:580px;width:545px;height:1px;background:#a86040"></div>
<div class="a" style="left:729px;top:581px;width:545px;height:1px;background:#d8967a"></div>
<div class="a" style="left:19px;top:620px;width:1256px;height:80px;background:#000"></div>
<div class="a" style="left:21px;top:621px;width:157px;height:78px;background:#d9738e"></div>
<div class="a" style="left:25px;top:626px;width:80px;height:15px;background:#d8d8d8;border-radius:3px"></div>
<div class="a" style="left:29px;top:626px;white-space:nowrap;font-size:11px;line-height:15px;color:#111">Track 3</div>
<div class="a" style="left:112px;top:628px;width:12px;height:12px;background:#d81818;border:1px solid #222;box-shadow:inset -1px -1px 0 #888"></div>
<div class="a" style="left:112px;top:628px;white-space:nowrap;width:12px;text-align:center;font-size:8px;line-height:12px;font-weight:bold;color:#600">R</div>
<div class="a" style="left:128px;top:628px;width:12px;height:12px;background:#d8dcd8;border:1px solid #222;box-shadow:inset -1px -1px 0 #888"></div>
<div class="a" style="left:128px;top:628px;white-space:nowrap;width:12px;text-align:center;font-size:8px;line-height:12px;font-weight:bold;color:#333">S</div>
<div class="a" style="left:144px;top:628px;width:12px;height:12px;background:#d8dcd8;border:1px solid #222;box-shadow:inset -1px -1px 0 #888"></div>
<div class="a" style="left:144px;top:628px;white-space:nowrap;width:12px;text-align:center;font-size:8px;line-height:12px;font-weight:bold;color:#2a5a3a">M</div>
<div class="a" style="left:162px;top:625px;white-space:nowrap;font-size:11px;color:#111">dB</div>
<div class="a" style="left:164px;top:640px;width:3px;height:54px;background:#050505"></div>
<div class="a" style="left:169px;top:640px;width:3px;height:54px;background:#050505"></div>
<div class="a" style="left:163px;top:652px;width:10px;height:1px;background:#222"></div>
<div class="a" style="left:171px;top:689px;white-space:nowrap;font-size:11px;line-height:11px;color:#111">+</div>
<div class="a" style="left:25px;top:656px;width:80px;height:15px;background:#fff;border:1px solid #111"></div>
<div class="a" style="left:29px;top:656px;white-space:nowrap;font-size:11px;line-height:15px;color:#111">Normal</div>
<svg class="a" style="left:95px;top:662px" width="9" height="5"><path d="M0 0h9L4.5 5z" fill="#000"/></svg>
<svg class="a" style="left:110px;top:648px;filter:drop-shadow(1px 1px 1px rgba(0,0,0,.45))" width="34" height="34"><defs><radialGradient id="kn2" cx=".3" cy=".25" r=".85"><stop offset="0" stop-color="#f4e8a0"/><stop offset=".5" stop-color="#e8c848"/><stop offset=".85" stop-color="#c09a18"/><stop offset="1" stop-color="#a07808"/></radialGradient></defs><circle cx="17" cy="17" r="15" fill="url(#kn2)" stroke="#fff4c8" stroke-width="1.5"/><circle cx="22.5" cy="24.0" r="3.3" fill="#3a3a4a"/></svg>
<div class="a" style="left:112px;top:681px;white-space:nowrap;font-size:11px;color:#2a1a1a">12 dB</div>
<svg class="a" style="left:26px;top:677px" width="16" height="16"><defs><radialGradient id="bt2_26" cx=".35" cy=".3" r=".8"><stop offset="0" stop-color="#fff"/><stop offset=".7" stop-color="#e8e8e8"/><stop offset="1" stop-color="#888"/></radialGradient></defs><circle cx="7.5" cy="7.5" r="7.3" fill="url(#bt2_26)"/><text x="8.5" y="10.5" font-size="7.5" font-weight="bold" text-anchor="middle" fill="#111" font-family="Liberation Sans">Lo</text></svg>
<svg class="a" style="left:46px;top:677px" width="16" height="16"><defs><radialGradient id="bt2_46" cx=".35" cy=".3" r=".8"><stop offset="0" stop-color="#fff"/><stop offset=".7" stop-color="#e8e8e8"/><stop offset="1" stop-color="#888"/></radialGradient></defs><circle cx="7.5" cy="7.5" r="7.3" fill="url(#bt2_46)"/><text x="8.5" y="10.5" font-size="7.5" font-weight="bold" text-anchor="middle" fill="#111" font-family="Liberation Sans">Ro</text></svg>
<svg class="a" style="left:66px;top:677px" width="16" height="16"><defs><radialGradient id="bt2_66" cx=".35" cy=".3" r=".8"><stop offset="0" stop-color="#fff"/><stop offset=".7" stop-color="#e8e8e8"/><stop offset="1" stop-color="#888"/></radialGradient></defs><circle cx="7.5" cy="7.5" r="7.3" fill="url(#bt2_66)"/><text x="8.5" y="10.5" font-size="7.5" font-weight="bold" text-anchor="middle" fill="#111" font-family="Liberation Sans">L/R</text></svg>
<svg class="a" style="left:86px;top:677px" width="16" height="16"><defs><radialGradient id="bt2_86" cx=".35" cy=".3" r=".8"><stop offset="0" stop-color="#fff"/><stop offset=".7" stop-color="#e8e8e8"/><stop offset="1" stop-color="#888"/></radialGradient></defs><circle cx="7.5" cy="7.5" r="7.3" fill="url(#bt2_86)"/><text x="8.5" y="10.5" font-size="7.5" font-weight="bold" text-anchor="middle" fill="#111" font-family="Liberation Sans">R/L</text></svg>
<div class="a" style="left:180px;top:621px;width:251px;height:79px;background:repeating-linear-gradient(-45deg,#d87a96 0 4.6px,#b8607e 4.6px 5.66px)"></div>
<div class="a" style="left:431px;top:620px;width:297px;height:81px;background:#d01010"></div>
<div class="a" style="left:432px;top:621px;width:295px;height:79px;background:#8b5a5f"></div>
<div class="a" style="left:432px;top:621px;width:295px;height:1px;background:#c01818"></div>
<div class="a" style="left:432px;top:699px;width:295px;height:1px;background:#c01818"></div>
<div class="a" style="left:431px;top:620px;width:1px;height:81px;background:#000"></div>
<div class="a" style="left:432px;top:621px;width:2px;height:79px;background:#c81818"></div>
<div class="a" style="left:727px;top:621px;width:2px;height:79px;background:#d8401c"></div>
<div class="a" style="left:729px;top:621px;width:545px;height:79px;background:linear-gradient(#d6718c,#e086a2 45%,#e38aa6 55%,#d6718c)"></div>
<div class="a" style="left:180px;top:660px;width:251px;height:1px;background:#a86040"></div>
<div class="a" style="left:180px;top:661px;width:251px;height:1px;background:#d8987a"></div>
<div class="a" style="left:432px;top:660px;width:295px;height:1px;background:#6a9a30"></div>
<div class="a" style="left:729px;top:660px;width:545px;height:1px;background:#a86040"></div>
<div class="a" style="left:729px;top:661px;width:545px;height:1px;background:#d8967a"></div>
<div class="a" style="left:19px;top:700px;width:1256px;height:80px;background:#000"></div>
<div class="a" style="left:21px;top:701px;width:157px;height:77px;background:#6e6e6e"></div>
<div class="a" style="left:25px;top:706px;width:80px;height:15px;background:#d8d8d8;border-radius:3px"></div>
<div class="a" style="left:29px;top:706px;white-space:nowrap;font-size:11px;line-height:15px;color:#111">Music 4</div>
<div class="a" style="left:112px;top:708px;width:12px;height:12px;background:#dcdcdc;border:1px solid #222;box-shadow:inset -1px -1px 0 #888"></div>
<div class="a" style="left:112px;top:708px;white-space:nowrap;width:12px;text-align:center;font-size:8px;line-height:12px;font-weight:bold;color:#222">R</div>
<div class="a" style="left:128px;top:708px;width:12px;height:12px;background:#d8dcd8;border:1px solid #222;box-shadow:inset -1px -1px 0 #888"></div>
<div class="a" style="left:128px;top:708px;white-space:nowrap;width:12px;text-align:center;font-size:8px;line-height:12px;font-weight:bold;color:#333">S</div>
<div class="a" style="left:144px;top:708px;width:12px;height:12px;background:#d8dcd8;border:1px solid #222;box-shadow:inset -1px -1px 0 #888"></div>
<div class="a" style="left:144px;top:708px;white-space:nowrap;width:12px;text-align:center;font-size:8px;line-height:12px;font-weight:bold;color:#2a5a3a">M</div>
<div class="a" style="left:162px;top:705px;white-space:nowrap;font-size:11px;color:#111">dB</div>
<div class="a" style="left:164px;top:720px;width:3px;height:54px;background:#050505"></div>
<div class="a" style="left:169px;top:720px;width:3px;height:54px;background:#050505"></div>
<div class="a" style="left:163px;top:732px;width:10px;height:1px;background:#222"></div>
<div class="a" style="left:171px;top:769px;white-space:nowrap;font-size:11px;line-height:11px;color:#111">+</div>
<div class="a" style="left:25px;top:736px;width:80px;height:15px;background:#fff;border:1px solid #111"></div>
<div class="a" style="left:29px;top:736px;white-space:nowrap;font-size:11px;line-height:15px;color:#111">Normal</div>
<svg class="a" style="left:95px;top:742px" width="9" height="5"><path d="M0 0h9L4.5 5z" fill="#000"/></svg>
<svg class="a" style="left:110px;top:728px;filter:drop-shadow(1px 1px 1px rgba(0,0,0,.45))" width="34" height="34"><defs><radialGradient id="kn3" cx=".3" cy=".25" r=".85"><stop offset="0" stop-color="#f4e8a0"/><stop offset=".5" stop-color="#e8c848"/><stop offset=".85" stop-color="#c09a18"/><stop offset="1" stop-color="#a07808"/></radialGradient></defs><circle cx="17" cy="17" r="15" fill="url(#kn3)" stroke="#fff4c8" stroke-width="1.5"/><circle cx="23.5" cy="22.0" r="3.3" fill="#3a3a4a"/></svg>
<div class="a" style="left:115px;top:761px;white-space:nowrap;font-size:11px;color:#2a1a1a">0 dB</div>
<svg class="a" style="left:26px;top:757px" width="16" height="16"><defs><radialGradient id="bt3_26" cx=".35" cy=".3" r=".8"><stop offset="0" stop-color="#fff"/><stop offset=".7" stop-color="#e8e8e8"/><stop offset="1" stop-color="#888"/></radialGradient></defs><circle cx="7.5" cy="7.5" r="7.3" fill="url(#bt3_26)"/><text x="8.5" y="10.5" font-size="7.5" font-weight="bold" text-anchor="middle" fill="#111" font-family="Liberation Sans">Lo</text></svg>
<svg class="a" style="left:46px;top:757px" width="16" height="16"><defs><radialGradient id="bt3_46" cx=".35" cy=".3" r=".8"><stop offset="0" stop-color="#fff"/><stop offset=".7" stop-color="#e8e8e8"/><stop offset="1" stop-color="#888"/></radialGradient></defs><circle cx="7.5" cy="7.5" r="7.3" fill="url(#bt3_46)"/><text x="8.5" y="10.5" font-size="7.5" font-weight="bold" text-anchor="middle" fill="#111" font-family="Liberation Sans">Ro</text></svg>
<svg class="a" style="left:66px;top:757px" width="16" height="16"><defs><radialGradient id="bt3_66" cx=".35" cy=".3" r=".8"><stop offset="0" stop-color="#fff"/><stop offset=".7" stop-color="#e8e8e8"/><stop offset="1" stop-color="#888"/></radialGradient></defs><circle cx="7.5" cy="7.5" r="7.3" fill="url(#bt3_66)"/><text x="8.5" y="10.5" font-size="7.5" font-weight="bold" text-anchor="middle" fill="#111" font-family="Liberation Sans">L/R</text></svg>
<svg class="a" style="left:86px;top:757px" width="16" height="16"><defs><radialGradient id="bt3_86" cx=".35" cy=".3" r=".8"><stop offset="0" stop-color="#fff"/><stop offset=".7" stop-color="#e8e8e8"/><stop offset="1" stop-color="#888"/></radialGradient></defs><circle cx="7.5" cy="7.5" r="7.3" fill="url(#bt3_86)"/><text x="8.5" y="10.5" font-size="7.5" font-weight="bold" text-anchor="middle" fill="#111" font-family="Liberation Sans">R/L</text></svg>
<div class="a" style="left:180px;top:701px;width:251px;height:79px;background:repeating-linear-gradient(-45deg,#3a3a3a 0 4.75px,#8a8a8a 4.75px 5.66px)"></div>
<div class="a" style="left:431px;top:701px;width:843px;height:78px;background:#f0f0f0"></div>
<div class="a" style="left:433px;top:703px;width:841px;height:74px;background:#6e6e6e"></div>
<div class="a" style="left:180px;top:740px;width:252px;height:1px;background:#8a8a20"></div>
<div class="a" style="left:434px;top:740px;width:840px;height:1px;background:#8a8a20"></div>
<div class="a" style="left:726px;top:702px;width:1px;height:76px;background:#8a8a20"></div>
<svg class="a" style="left:0px;top:0px;pointer-events:none" width="1430" height="890"><polygon points="433.0,565.9 433.8,566.9 434.5,567.2 435.2,565.2 436.0,566.9 436.8,565.7 437.5,564.0 438.2,563.8 439.0,564.1 439.8,564.1 440.5,567.2 441.2,564.4 442.0,566.8 442.8,566.8 443.5,566.8 444.2,566.8 445.0,567.2 445.8,564.1 446.5,564.3 447.2,566.8 448.0,567.4 448.8,565.4 449.5,565.6 450.2,567.5 451.0,564.2 451.8,565.1 452.5,565.1 453.2,566.4 454.0,564.9 454.8,564.3 455.5,565.3 456.2,564.0 457.0,566.0 457.8,565.8 458.5,565.6 459.2,564.3 460.0,566.8 460.8,565.5 461.5,565.0 462.2,566.8 463.0,564.1 463.8,565.0 464.5,563.0 465.2,565.3 466.0,565.1 466.8,564.1 467.5,565.4 468.2,564.2 469.0,566.2 469.8,565.2 470.5,566.8 471.2,566.4 472.0,565.6 472.8,563.5 473.5,565.7 474.2,563.4 475.0,565.3 475.8,564.5 476.5,565.5 477.2,564.1 478.0,563.2 478.8,566.6 479.5,565.8 480.2,564.1 481.0,566.3 481.8,566.6 482.5,564.9 483.2,564.5 484.0,564.3 484.8,563.6 485.5,564.6 486.2,567.5 487.0,565.7 487.8,565.2 488.5,566.9 489.2,567.3 490.0,565.7 490.8,566.9 491.5,562.6 492.2,565.3 493.0,566.6 493.8,564.4 494.5,563.8 495.2,565.3 496.0,565.2 496.8,565.1 497.5,566.6 498.2,566.6 499.0,564.0 499.8,567.4 500.5,562.1 501.2,566.2 502.0,565.6 502.8,566.1 503.5,567.3 504.2,565.7 505.0,563.2 505.8,564.1 506.5,565.5 507.2,564.9 508.0,566.3 508.8,564.9 509.5,566.4 510.2,565.3 511.0,566.2 511.8,564.4 512.5,566.0 513.2,566.4 514.0,567.2 514.8,565.1 515.5,567.2 516.2,566.3 517.0,564.3 517.8,566.4 518.5,566.2 519.2,564.7 520.0,564.4 520.8,564.1 521.5,564.6 522.2,567.0 523.0,565.7 523.8,565.8 524.5,564.6 525.2,564.1 526.0,563.4 526.8,566.8 527.5,567.1 528.2,565.5 529.0,566.7 529.8,566.9 530.5,566.6 531.2,565.8 532.0,565.7 532.8,567.5 533.5,565.8 534.2,565.3 535.0,567.5 535.8,563.3 536.5,564.5 537.2,564.6 538.0,566.4 538.8,566.3 539.5,564.6 540.2,565.5 541.0,565.4 541.8,566.1 542.5,564.2 543.2,564.7 544.0,564.6 544.8,562.9 545.5,564.8 546.2,566.1 547.0,567.5 547.8,565.7 548.5,564.3 549.2,564.0 550.0,565.3 550.8,566.4 551.5,567.0 552.2,564.3 553.0,566.5 553.8,565.5 554.5,565.2 555.2,564.0 556.0,563.7 556.8,562.9 557.5,565.9 558.2,565.8 559.0,565.5 559.8,563.9 560.5,564.9 561.2,565.8 562.0,566.4 562.8,565.2 563.5,565.5 564.2,563.3 565.0,564.4 565.8,567.4 566.5,565.9 567.2,564.6 568.0,566.8 568.8,565.0 569.5,565.1 570.2,565.0 571.0,566.2 571.8,564.3 572.5,566.0 573.2,566.6 574.0,566.5 574.8,565.9 575.5,565.6 576.2,565.7 577.0,562.6 577.8,564.8 578.5,563.7 579.2,566.8 580.0,566.6 580.8,564.7 581.5,565.3 582.2,566.9 583.0,567.3 583.8,565.8 584.5,567.4 585.2,565.9 586.0,566.7 586.8,566.2 587.5,564.0 588.2,564.4 589.0,566.8 589.8,566.8 590.5,564.5 591.2,565.9 592.0,565.0 592.8,564.8 593.5,567.2 594.2,566.1 595.0,566.4 595.8,565.0 596.5,566.1 597.2,566.7 598.0,564.1 598.8,565.2 599.5,566.0 600.2,565.1 601.0,565.5 601.8,565.1 602.5,567.3 603.2,566.4 604.0,566.6 604.8,566.2 605.5,566.1 606.2,563.8 607.0,563.4 607.8,567.5 608.5,565.6 609.2,566.3 610.0,564.1 610.8,566.2 611.5,564.6 612.2,567.2 613.0,566.9 613.8,564.7 614.5,566.3 615.2,565.0 616.0,565.2 616.8,561.7 617.5,564.2 618.2,566.5 619.0,565.6 619.8,566.5 620.5,565.1 621.2,564.2 622.0,563.3 622.8,566.2 623.5,567.2 624.2,565.8 625.0,565.2 625.8,566.0 626.5,565.8 627.2,567.5 628.0,564.7 628.8,560.7 629.5,562.3 630.2,565.2 631.0,564.3 631.8,564.9 632.5,566.0 633.2,566.9 634.0,569.6 634.8,568.4 635.5,571.9 636.2,572.2 637.0,573.6 637.8,574.5 638.5,573.5 639.2,574.6 640.0,577.2 640.8,578.0 641.5,578.4 642.2,578.7 643.0,578.7 643.8,578.8 644.5,577.3 645.2,578.5 646.0,578.6 646.8,578.5 647.5,578.7 648.2,576.3 649.0,578.5 649.8,578.6 650.5,578.7 651.2,578.7 652.0,578.7 652.8,578.2 653.5,577.5 654.2,573.5 655.0,575.0 655.8,574.7 656.5,571.9 657.2,571.2 658.0,568.1 658.8,569.0 659.5,566.8 660.2,566.9 661.0,564.9 661.8,564.2 662.5,567.1 663.2,565.3 664.0,565.3 664.8,561.6 665.5,566.1 666.2,567.0 667.0,566.4 667.8,567.4 668.5,566.4 669.2,565.8 670.0,566.2 670.8,567.3 671.5,565.4 672.2,564.9 673.0,565.4 673.8,565.4 674.5,566.5 675.2,564.5 676.0,564.6 676.8,567.3 677.5,562.0 678.2,564.9 679.0,564.8 679.8,567.1 680.5,565.2 681.2,565.5 682.0,567.1 682.8,565.1 683.5,567.1 684.2,566.9 685.0,564.6 685.8,565.1 686.5,567.3 687.2,565.6 688.0,563.8 688.8,565.5 689.5,561.9 690.2,562.7 691.0,565.1 691.8,565.0 692.5,566.5 693.2,566.5 694.0,565.4 694.8,564.8 695.5,566.7 696.2,565.5 697.0,562.1 697.8,564.0 698.5,567.4 699.2,563.8 700.0,565.8 700.8,565.8 701.5,566.3 702.2,564.5 703.0,565.4 703.8,564.4 704.5,564.6 705.2,564.7 706.0,566.3 706.8,565.7 707.5,566.0 708.2,566.7 709.0,566.9 709.8,564.7 710.5,566.1 711.2,563.4 712.0,566.2 712.8,567.5 713.5,566.8 714.2,567.0 715.0,564.4 715.8,566.6 716.5,566.4 717.2,564.8 718.0,566.4 718.8,565.5 719.5,564.5 720.2,564.8 721.0,566.0 721.8,565.9 722.5,565.3 723.2,564.4 724.0,564.3 724.8,565.7 725.5,562.1 725.5,595.9 724.8,593.1 724.0,595.5 723.2,594.4 722.5,594.7 721.8,594.5 721.0,595.3 720.2,595.6 719.5,595.8 718.8,595.9 718.0,595.4 717.2,592.8 716.5,594.3 715.8,593.1 715.0,594.1 714.2,595.5 713.5,595.8 712.8,592.7 712.0,595.1 711.2,595.2 710.5,593.7 709.8,595.2 709.0,593.6 708.2,594.3 707.5,594.2 706.8,594.1 706.0,595.2 705.2,595.9 704.5,594.5 703.8,596.0 703.0,592.8 702.2,594.2 701.5,595.9 700.8,595.5 700.0,593.9 699.2,593.1 698.5,594.9 697.8,592.7 697.0,592.8 696.2,599.1 695.5,595.0 694.8,595.8 694.0,594.4 693.2,593.0 692.5,594.2 691.8,592.6 691.0,595.0 690.2,594.5 689.5,593.2 688.8,593.0 688.0,597.9 687.2,594.1 686.5,595.0 685.8,595.1 685.0,594.2 684.2,594.3 683.5,594.5 682.8,594.9 682.0,592.6 681.2,593.9 680.5,592.9 679.8,595.7 679.0,593.8 678.2,595.9 677.5,595.1 676.8,594.7 676.0,595.4 675.2,598.3 674.5,593.4 673.8,594.2 673.0,594.6 672.2,593.9 671.5,593.6 670.8,594.3 670.0,593.7 669.2,593.5 668.5,595.6 667.8,596.6 667.0,595.9 666.2,596.8 665.5,595.9 664.8,593.0 664.0,594.1 663.2,593.5 662.5,596.3 661.8,593.7 661.0,597.1 660.2,595.1 659.5,593.9 658.8,592.8 658.0,591.0 657.2,589.1 656.5,587.6 655.8,586.2 655.0,587.8 654.2,583.2 653.5,582.6 652.8,581.6 652.0,581.3 651.2,581.4 650.5,581.3 649.8,583.5 649.0,581.2 648.2,581.7 647.5,581.3 646.8,581.4 646.0,581.5 645.2,581.2 644.5,582.4 643.8,581.4 643.0,581.4 642.2,581.3 641.5,581.3 640.8,582.0 640.0,586.3 639.2,583.8 638.5,584.2 637.8,584.9 637.0,586.9 636.2,588.3 635.5,588.0 634.8,590.6 634.0,592.8 633.2,594.2 632.5,594.5 631.8,593.6 631.0,593.7 630.2,594.7 629.5,593.3 628.8,593.9 628.0,595.3 627.2,592.5 626.5,595.1 625.8,593.7 625.0,595.8 624.2,595.8 623.5,596.0 622.8,592.7 622.0,593.4 621.2,592.9 620.5,593.4 619.8,595.2 619.0,593.6 618.2,592.9 617.5,595.1 616.8,594.0 616.0,592.5 615.2,596.6 614.5,595.4 613.8,593.4 613.0,592.7 612.2,594.1 611.5,593.2 610.8,594.4 610.0,594.7 609.2,595.0 608.5,595.4 607.8,593.3 607.0,593.3 606.2,594.3 605.5,595.4 604.8,595.2 604.0,594.1 603.2,593.7 602.5,594.2 601.8,592.6 601.0,596.0 600.2,596.5 599.5,593.8 598.8,593.3 598.0,595.7 597.2,594.7 596.5,593.3 595.8,593.2 595.0,593.0 594.2,593.0 593.5,595.2 592.8,592.6 592.0,593.0 591.2,593.4 590.5,592.7 589.8,594.1 589.0,595.1 588.2,595.4 587.5,594.9 586.8,596.0 586.0,593.3 585.2,596.0 584.5,593.0 583.8,593.0 583.0,593.2 582.2,594.9 581.5,597.4 580.8,594.7 580.0,595.7 579.2,594.2 578.5,595.0 577.8,594.2 577.0,593.3 576.2,594.3 575.5,594.8 574.8,595.8 574.0,595.6 573.2,593.5 572.5,592.6 571.8,598.2 571.0,594.6 570.2,593.3 569.5,592.8 568.8,595.5 568.0,595.9 567.2,593.1 566.5,595.7 565.8,594.2 565.0,593.7 564.2,593.5 563.5,597.2 562.8,595.3 562.0,592.7 561.2,594.9 560.5,594.3 559.8,595.6 559.0,594.3 558.2,595.5 557.5,594.9 556.8,593.0 556.0,593.4 555.2,595.5 554.5,595.1 553.8,593.1 553.0,594.5 552.2,597.5 551.5,594.5 550.8,597.5 550.0,593.3 549.2,595.4 548.5,596.7 547.8,597.3 547.0,596.1 546.2,595.3 545.5,593.6 544.8,594.0 544.0,593.7 543.2,596.4 542.5,593.6 541.8,593.2 541.0,594.4 540.2,596.0 539.5,593.8 538.8,593.9 538.0,593.6 537.2,597.2 536.5,593.9 535.8,594.1 535.0,596.3 534.2,597.1 533.5,593.4 532.8,595.3 532.0,596.0 531.2,595.8 530.5,593.7 529.8,594.4 529.0,593.3 528.2,592.9 527.5,594.7 526.8,597.0 526.0,596.0 525.2,595.0 524.5,595.3 523.8,595.0 523.0,593.7 522.2,593.3 521.5,597.9 520.8,592.7 520.0,594.3 519.2,597.1 518.5,593.8 517.8,595.6 517.0,594.0 516.2,592.9 515.5,594.9 514.8,592.7 514.0,592.8 513.2,595.7 512.5,593.8 511.8,594.7 511.0,593.7 510.2,594.9 509.5,594.0 508.8,595.9 508.0,594.5 507.2,595.6 506.5,594.3 505.8,594.8 505.0,594.1 504.2,594.1 503.5,594.2 502.8,592.7 502.0,595.3 501.2,594.5 500.5,594.0 499.8,595.9 499.0,592.7 498.2,594.3 497.5,593.2 496.8,592.6 496.0,593.9 495.2,595.8 494.5,595.4 493.8,595.2 493.0,595.2 492.2,594.3 491.5,595.3 490.8,593.9 490.0,592.5 489.2,595.2 488.5,596.0 487.8,594.3 487.0,594.9 486.2,595.7 485.5,592.9 484.8,595.0 484.0,595.7 483.2,593.3 482.5,594.7 481.8,594.0 481.0,596.8 480.2,593.3 479.5,594.7 478.8,594.0 478.0,593.9 477.2,595.3 476.5,594.3 475.8,595.5 475.0,594.5 474.2,594.3 473.5,594.9 472.8,595.8 472.0,592.6 471.2,595.2 470.5,595.9 469.8,595.4 469.0,595.3 468.2,594.1 467.5,595.3 466.8,593.7 466.0,594.8 465.2,594.8 464.5,593.5 463.8,595.7 463.0,592.6 462.2,594.2 461.5,593.1 460.8,594.2 460.0,595.7 459.2,595.6 458.5,594.9 457.8,594.2 457.0,597.2 456.2,593.8 455.5,596.9 454.8,595.3 454.0,595.7 453.2,594.4 452.5,594.7 451.8,595.8 451.0,595.6 450.2,594.0 449.5,593.5 448.8,595.8 448.0,595.0 447.2,594.6 446.5,593.1 445.8,595.5 445.0,594.6 444.2,593.6 443.5,598.2 442.8,595.3 442.0,596.2 441.2,593.1 440.5,596.0 439.8,594.7 439.0,593.2 438.2,593.9 437.5,595.0 436.8,594.8 436.0,594.1 435.2,592.5 434.5,592.6 433.8,596.3 433.0,594.1" fill="#7d9cac"/><rect x="432" y="580" width="295" height="1" fill="#6a9a30"/></svg>
<svg class="a" style="left:0px;top:0px;pointer-events:none" width="1430" height="890"><polygon points="435.0,499.4 437.0,499.4 439.0,499.4 441.0,499.6 443.0,499.5 445.0,499.3 447.0,499.5 449.0,499.4 451.0,499.2 453.0,499.4 455.0,499.3 457.0,499.3 459.0,499.5 461.0,499.4 463.0,499.4 465.0,499.4 467.0,499.5 469.0,499.4 471.0,499.5 473.0,499.3 475.0,499.2 477.0,499.3 479.0,499.3 481.0,499.3 483.0,499.3 485.0,499.5 487.0,499.6 489.0,499.4 491.0,499.3 493.0,499.2 495.0,499.5 497.0,499.5 499.0,499.2 501.0,499.5 503.0,499.3 505.0,499.3 507.0,499.3 509.0,499.2 511.0,499.3 513.0,499.4 515.0,499.3 517.0,499.4 519.0,499.6 521.0,499.3 523.0,499.3 525.0,499.3 527.0,499.4 529.0,499.5 531.0,499.3 533.0,499.4 535.0,499.2 537.0,499.2 539.0,499.2 541.0,499.4 543.0,499.4 545.0,499.5 547.0,499.4 549.0,499.3 551.0,499.5 553.0,499.5 555.0,499.5 557.0,499.4 559.0,499.2 561.0,499.4 563.0,499.5 565.0,499.2 567.0,499.4 569.0,499.3 571.0,499.3 573.0,499.2 575.0,499.4 577.0,499.4 579.0,499.3 581.0,499.5 583.0,499.5 585.0,499.3 587.0,499.3 589.0,499.3 591.0,499.4 593.0,499.4 595.0,499.2 597.0,499.5 599.0,499.3 601.0,499.5 603.0,499.4 605.0,499.4 607.0,499.3 609.0,499.5 611.0,499.5 613.0,499.4 615.0,499.5 615.0,500.6 613.0,500.4 611.0,500.5 609.0,500.7 607.0,500.7 605.0,500.7 603.0,500.7 601.0,500.6 599.0,500.6 597.0,500.5 595.0,500.5 593.0,500.8 591.0,500.5 589.0,500.6 587.0,500.7 585.0,500.6 583.0,500.7 581.0,500.6 579.0,500.5 577.0,500.5 575.0,500.8 573.0,500.5 571.0,500.8 569.0,500.6 567.0,500.7 565.0,500.5 563.0,500.6 561.0,500.6 559.0,500.7 557.0,500.6 555.0,500.5 553.0,500.6 551.0,500.6 549.0,500.5 547.0,500.6 545.0,500.8 543.0,500.6 541.0,500.5 539.0,500.7 537.0,500.7 535.0,500.5 533.0,500.8 531.0,500.8 529.0,500.7 527.0,500.5 525.0,500.6 523.0,500.7 521.0,500.5 519.0,500.5 517.0,500.6 515.0,500.6 513.0,500.8 511.0,500.8 509.0,500.7 507.0,500.5 505.0,500.5 503.0,500.8 501.0,500.7 499.0,500.6 497.0,500.8 495.0,500.7 493.0,500.7 491.0,500.8 489.0,500.7 487.0,500.6 485.0,500.8 483.0,500.5 481.0,500.5 479.0,500.7 477.0,500.7 475.0,500.8 473.0,500.7 471.0,500.5 469.0,500.6 467.0,500.7 465.0,500.6 463.0,500.8 461.0,500.6 459.0,500.8 457.0,500.7 455.0,500.5 453.0,500.5 451.0,500.5 449.0,500.7 447.0,500.6 445.0,500.6 443.0,500.6 441.0,500.6 439.0,500.6 437.0,500.8 435.0,500.6" fill="#90a8b0"/><rect x="434" y="660" width="293" height="1" fill="#a88a30"/><rect x="440" y="659" width="2" height="1" fill="#a89060"/><rect x="447" y="659" width="2" height="1" fill="#a89060"/><rect x="454" y="659" width="2" height="1" fill="#a89060"/><rect x="461" y="659" width="2" height="1" fill="#a89060"/><rect x="468" y="659" width="2" height="1" fill="#a89060"/><rect x="475" y="659" width="2" height="1" fill="#a89060"/><rect x="482" y="659" width="2" height="1" fill="#a89060"/><rect x="489" y="659" width="2" height="1" fill="#a89060"/><rect x="496" y="659" width="2" height="1" fill="#a89060"/><rect x="503" y="659" width="2" height="1" fill="#a89060"/><rect x="510" y="659" width="2" height="1" fill="#a89060"/><rect x="517" y="659" width="2" height="1" fill="#a89060"/><rect x="524" y="659" width="2" height="1" fill="#a89060"/><rect x="531" y="659" width="2" height="1" fill="#a89060"/><rect x="538" y="659" width="2" height="1" fill="#a89060"/><rect x="545" y="659" width="2" height="1" fill="#a89060"/><rect x="552" y="659" width="2" height="1" fill="#a89060"/><rect x="559" y="659" width="2" height="1" fill="#a89060"/><rect x="566" y="659" width="2" height="1" fill="#a89060"/><rect x="573" y="659" width="2" height="1" fill="#a89060"/><rect x="580" y="659" width="2" height="1" fill="#a89060"/><rect x="587" y="659" width="2" height="1" fill="#a89060"/><rect x="594" y="659" width="2" height="1" fill="#a89060"/><rect x="601" y="659" width="2" height="1" fill="#a89060"/><rect x="608" y="659" width="2" height="1" fill="#a89060"/><rect x="615" y="659" width="2" height="1" fill="#a89060"/><rect x="622" y="659" width="2" height="1" fill="#a89060"/><rect x="629" y="659" width="2" height="1" fill="#a89060"/><rect x="636" y="659" width="2" height="1" fill="#a89060"/><rect x="643" y="659" width="2" height="1" fill="#a89060"/><rect x="650" y="659" width="2" height="1" fill="#a89060"/><rect x="657" y="659" width="2" height="1" fill="#a89060"/></svg>
<svg class="a" style="left:0px;top:0px;pointer-events:none" width="1430" height="890"><polygon points="436.0,739.3 436.8,739.5 437.5,739.6 438.2,739.5 439.0,739.6 439.8,739.6 440.5,739.5 441.2,739.4 442.0,739.3 442.8,739.5 443.5,739.4 444.2,739.6 445.0,739.5 445.8,739.6 446.5,739.5 447.2,739.6 448.0,739.4 448.8,739.4 449.5,739.6 450.2,739.3 451.0,739.5 451.8,739.5 452.5,738.8 453.2,738.6 454.0,738.3 454.8,738.4 455.5,737.3 456.2,738.1 457.0,738.0 457.8,737.2 458.5,737.7 459.2,737.6 460.0,736.9 460.8,736.0 461.5,737.2 462.2,735.0 463.0,737.5 463.8,737.2 464.5,736.1 465.2,735.1 466.0,737.1 466.8,737.4 467.5,736.2 468.2,736.4 469.0,737.1 469.8,736.4 470.5,736.2 471.2,736.0 472.0,736.2 472.8,734.8 473.5,733.6 474.2,734.6 475.0,735.5 475.8,734.5 476.5,736.2 477.2,734.8 478.0,734.4 478.8,735.2 479.5,733.2 480.2,734.5 481.0,735.0 481.8,732.7 482.5,737.1 483.2,736.6 484.0,736.8 484.8,736.4 485.5,737.1 486.2,737.9 487.0,738.1 487.8,737.4 488.5,737.1 489.2,738.5 490.0,738.6 490.8,738.0 491.5,737.6 492.2,738.5 493.0,739.5 493.8,739.4 494.5,739.6 495.2,739.1 496.0,739.4 496.8,739.7 497.5,739.3 498.2,739.6 499.0,739.6 499.8,738.8 500.5,738.9 501.2,738.3 502.0,737.9 502.8,738.4 503.5,737.4 504.2,736.3 505.0,738.2 505.8,738.0 506.5,737.5 507.2,737.4 508.0,737.2 508.8,736.8 509.5,736.7 510.2,736.4 511.0,737.3 511.8,737.0 512.5,736.7 513.2,736.9 514.0,736.5 514.8,736.4 515.5,737.8 516.2,736.8 517.0,737.7 517.8,736.9 518.5,736.5 519.2,737.5 520.0,738.3 520.8,737.4 521.5,737.2 522.2,738.1 523.0,737.7 523.8,738.0 524.5,738.8 525.2,738.6 526.0,739.7 526.8,739.4 527.5,739.5 528.2,739.6 529.0,739.5 529.8,739.5 530.5,739.4 531.2,739.5 532.0,739.5 532.8,739.6 533.5,739.6 534.2,739.4 535.0,739.5 535.8,738.7 536.5,737.8 537.2,737.8 538.0,737.7 538.8,737.8 539.5,736.9 540.2,736.8 541.0,737.6 541.8,736.4 542.5,737.5 543.2,736.2 544.0,736.6 544.8,737.3 545.5,735.7 546.2,735.7 547.0,735.0 547.8,736.7 548.5,735.4 549.2,735.2 550.0,735.4 550.8,734.7 551.5,733.2 552.2,732.9 553.0,732.3 553.8,733.6 554.5,731.1 555.2,731.3 556.0,732.9 556.8,729.2 557.5,729.5 558.2,732.3 559.0,731.9 559.8,730.7 560.5,731.0 561.2,732.3 562.0,734.3 562.8,734.8 563.5,731.4 564.2,734.8 565.0,734.9 565.8,728.5 566.5,731.8 567.2,731.6 568.0,731.2 568.8,730.1 569.5,728.3 570.2,731.4 571.0,727.7 571.8,734.3 572.5,733.2 573.2,732.3 574.0,733.4 574.8,735.3 575.5,734.6 576.2,732.2 577.0,731.4 577.8,736.1 578.5,733.8 579.2,735.2 580.0,735.1 580.8,734.6 581.5,734.8 582.2,735.4 583.0,733.7 583.8,735.4 584.5,734.0 585.2,736.4 586.0,734.1 586.8,734.2 587.5,734.4 588.2,733.9 589.0,730.0 589.8,734.1 590.5,734.0 591.2,733.9 592.0,732.9 592.8,734.1 593.5,735.5 594.2,735.2 595.0,735.2 595.8,735.0 596.5,735.6 597.2,733.3 598.0,735.2 598.8,734.2 599.5,733.4 600.2,733.6 601.0,734.9 601.8,733.4 602.5,734.9 603.2,735.5 604.0,736.1 604.8,735.7 605.5,733.7 606.2,735.8 607.0,733.7 607.8,732.9 608.5,735.0 609.2,734.3 610.0,728.4 610.8,731.0 611.5,733.6 612.2,733.1 613.0,734.7 613.8,735.3 614.5,733.4 615.2,734.5 616.0,735.6 616.8,736.1 617.5,733.9 618.2,733.5 619.0,735.2 619.8,735.1 620.5,732.9 621.2,735.2 622.0,734.0 622.8,735.4 623.5,735.7 624.2,736.4 625.0,734.7 625.8,737.2 626.5,736.1 627.2,735.8 628.0,735.4 628.8,735.9 629.5,735.4 630.2,736.2 631.0,735.0 631.8,734.8 632.5,737.9 633.2,737.1 634.0,737.6 634.8,737.5 635.5,737.9 636.2,737.9 637.0,737.8 637.8,737.8 638.5,737.5 639.2,738.8 640.0,739.4 640.8,739.5 641.5,739.2 642.2,739.7 643.0,739.6 643.8,739.2 644.5,739.6 645.2,739.4 646.0,739.5 646.8,739.5 647.5,739.5 648.2,739.5 649.0,739.5 649.8,739.5 650.5,739.1 651.2,738.7 652.0,738.0 652.8,738.4 653.5,737.4 654.2,738.2 655.0,737.8 655.8,737.5 656.5,736.6 657.2,736.7 658.0,736.5 658.8,737.1 659.5,737.8 660.2,737.2 661.0,736.8 661.8,736.7 662.5,737.2 663.2,736.1 664.0,735.9 664.8,737.2 665.5,737.3 666.2,736.2 667.0,736.6 667.8,735.4 668.5,737.1 669.2,737.1 670.0,735.2 670.8,737.0 671.5,736.8 672.2,735.0 673.0,735.1 673.8,731.9 674.5,732.7 675.2,734.0 676.0,732.9 676.8,735.3 677.5,733.5 678.2,731.2 679.0,730.6 679.8,731.6 680.5,728.9 681.2,728.4 682.0,727.8 682.8,732.8 683.5,728.3 684.2,726.5 685.0,733.2 685.8,730.9 686.5,731.1 687.2,734.5 688.0,734.6 688.8,735.0 689.5,734.5 690.2,734.8 691.0,736.2 691.8,732.9 692.5,734.9 693.2,735.7 694.0,734.5 694.8,736.6 695.5,735.1 696.2,734.8 697.0,734.7 697.8,735.9 698.5,736.2 699.2,736.0 700.0,735.0 700.8,734.8 701.5,735.5 702.2,734.9 703.0,734.6 703.8,734.7 704.5,730.5 705.2,735.7 706.0,733.9 706.8,734.5 707.5,734.9 708.2,731.8 709.0,736.3 709.8,733.9 710.5,735.3 711.2,734.7 712.0,735.0 712.8,735.6 713.5,734.6 714.2,735.7 715.0,735.3 715.8,735.4 716.5,735.3 717.2,733.7 718.0,735.1 718.8,734.3 719.5,733.7 720.2,732.5 721.0,729.0 721.8,735.5 722.5,734.0 723.2,735.4 724.0,736.8 724.8,733.1 725.5,734.6 726.2,733.7 727.0,735.6 727.8,735.5 728.5,735.8 729.2,732.4 730.0,734.6 730.8,736.9 731.5,736.9 732.2,735.3 733.0,734.8 733.8,734.8 734.5,735.4 735.2,736.8 736.0,734.1 736.8,735.5 737.5,735.5 738.2,736.2 739.0,737.3 739.8,735.8 740.5,735.9 741.2,735.8 742.0,735.0 742.8,735.9 743.5,737.1 744.2,735.8 745.0,735.9 745.8,736.8 746.5,736.7 747.2,737.5 748.0,736.7 748.8,736.0 749.5,735.8 750.2,736.9 751.0,737.0 751.8,737.3 752.5,737.3 753.2,737.6 754.0,737.2 754.8,737.9 755.5,737.7 756.2,738.5 757.0,737.7 757.8,739.0 758.5,739.4 759.2,739.4 760.0,739.6 760.8,739.6 761.5,739.1 762.2,738.3 763.0,737.7 763.8,737.6 764.5,737.1 765.2,737.3 766.0,737.4 766.8,737.8 767.5,737.1 768.2,736.9 769.0,737.2 769.8,736.2 770.5,737.0 771.2,737.4 772.0,736.9 772.8,734.9 773.5,735.5 774.2,736.6 775.0,735.9 775.8,735.7 776.5,736.9 777.2,736.4 778.0,736.5 778.8,735.3 779.5,735.9 780.2,737.2 781.0,736.6 781.8,735.6 782.5,737.0 783.2,735.4 784.0,737.2 784.8,736.9 785.5,735.0 786.2,735.9 787.0,736.9 787.8,737.2 788.5,735.5 789.2,736.6 790.0,735.9 790.8,735.0 791.5,736.4 792.2,736.6 793.0,736.5 793.8,735.9 794.5,735.6 795.2,736.2 796.0,736.5 796.8,735.5 797.5,736.2 798.2,736.7 799.0,736.2 799.8,736.2 800.5,737.5 801.2,737.4 802.0,736.8 802.8,735.9 803.5,737.0 804.2,737.7 805.0,738.1 805.8,737.6 806.5,737.7 807.2,737.8 808.0,738.1 808.8,738.9 809.5,739.4 810.2,739.5 811.0,739.4 811.8,739.4 812.5,739.5 813.2,739.2 814.0,738.6 814.8,738.9 815.5,738.1 816.2,738.0 817.0,738.2 817.8,738.2 818.5,737.5 819.2,738.0 820.0,737.7 820.8,737.4 821.5,737.5 822.2,737.4 823.0,737.7 823.8,737.4 824.5,735.2 825.2,737.3 826.0,737.5 826.8,736.3 827.5,737.3 828.2,735.3 829.0,734.5 829.8,736.9 830.5,737.1 831.2,735.9 832.0,736.2 832.8,736.1 833.5,737.4 834.2,735.3 835.0,737.4 835.8,736.4 836.5,736.1 837.2,737.4 838.0,736.2 838.8,736.5 839.5,736.3 840.2,735.0 841.0,736.9 841.8,735.5 842.5,736.5 843.2,736.2 844.0,736.1 844.8,734.4 845.5,736.5 846.2,736.2 847.0,737.2 847.8,732.9 848.5,737.3 849.2,737.2 850.0,734.4 850.8,736.2 851.5,735.1 852.2,736.9 853.0,735.9 853.8,734.9 854.5,735.6 855.2,734.0 856.0,736.8 856.8,735.8 857.5,736.3 858.2,735.7 859.0,735.8 859.8,735.0 860.5,732.8 861.2,735.9 862.0,735.3 862.8,734.1 863.5,734.9 864.2,735.0 865.0,734.9 865.8,735.1 866.5,736.8 867.2,736.6 868.0,734.4 868.8,736.1 869.5,735.6 870.2,735.2 871.0,735.2 871.8,735.4 872.5,736.5 873.2,737.1 874.0,736.8 874.8,736.0 875.5,736.5 876.2,735.4 877.0,737.2 877.8,735.3 878.5,736.9 879.2,735.8 880.0,736.4 880.8,734.6 881.5,736.4 882.2,737.1 883.0,736.6 883.8,736.7 884.5,736.7 885.2,737.2 886.0,736.3 886.8,736.0 887.5,735.9 888.2,737.7 889.0,737.7 889.8,737.4 890.5,737.6 891.2,735.7 892.0,736.0 892.8,737.8 893.5,736.3 894.2,737.0 895.0,736.6 895.8,736.1 896.5,736.1 897.2,737.6 898.0,737.7 898.8,736.9 899.5,737.9 900.2,737.8 901.0,737.7 901.8,738.2 902.5,737.5 903.2,737.4 904.0,737.9 904.8,738.3 905.5,738.9 906.2,739.0 907.0,739.5 907.8,739.5 908.5,739.5 909.2,739.5 910.0,739.1 910.8,739.5 911.5,739.6 912.2,739.6 913.0,739.5 913.8,739.5 914.5,739.6 915.2,739.0 916.0,738.8 916.8,737.9 917.5,737.9 918.2,737.7 919.0,737.2 919.8,738.0 920.5,736.8 921.2,736.8 922.0,736.4 922.8,737.8 923.5,735.5 924.2,737.5 925.0,736.9 925.8,735.9 926.5,736.4 927.2,734.4 928.0,736.1 928.8,737.0 929.5,737.3 930.2,735.4 931.0,736.3 931.8,737.2 932.5,736.9 933.2,735.2 934.0,735.4 934.8,734.1 935.5,734.0 936.2,735.1 937.0,735.8 937.8,735.8 938.5,735.0 939.2,733.0 940.0,735.1 940.8,735.8 941.5,734.9 942.2,732.2 943.0,734.8 943.8,734.3 944.5,736.0 945.2,735.0 946.0,735.4 946.8,734.1 947.5,733.4 948.2,734.8 949.0,733.1 949.8,735.2 950.5,734.8 951.2,735.0 952.0,735.0 952.8,734.7 953.5,734.5 954.2,736.8 955.0,735.6 955.8,734.9 956.5,736.3 957.2,734.6 958.0,735.7 958.8,735.3 959.5,735.3 960.2,733.6 961.0,735.2 961.8,735.8 962.5,736.1 963.2,735.8 964.0,735.8 964.8,735.5 965.5,736.5 966.2,734.7 967.0,736.9 967.8,734.6 968.5,735.0 969.2,735.8 970.0,735.8 970.8,736.7 971.5,735.0 972.2,736.0 973.0,736.4 973.8,735.6 974.5,735.6 975.2,735.7 976.0,736.0 976.8,735.8 977.5,736.3 978.2,736.4 979.0,736.2 979.8,736.6 980.5,736.2 981.2,735.0 982.0,737.7 982.8,737.0 983.5,736.8 984.2,736.8 985.0,737.9 985.8,737.0 986.5,737.2 987.2,738.2 988.0,738.3 988.8,738.8 989.5,739.0 990.2,739.3 991.0,739.7 991.8,739.6 992.5,739.6 993.2,739.5 994.0,739.6 994.8,739.6 995.5,739.5 996.2,738.9 997.0,738.8 997.8,737.3 998.5,737.7 999.2,737.4 1000.0,736.8 1000.8,736.6 1001.5,737.4 1002.2,736.9 1003.0,737.6 1003.8,736.8 1004.5,737.4 1005.2,736.6 1006.0,737.1 1006.8,737.1 1007.5,737.0 1008.2,735.9 1009.0,735.5 1009.8,735.3 1010.5,736.8 1011.2,735.8 1012.0,737.2 1012.8,736.2 1013.5,734.9 1014.2,735.4 1015.0,736.4 1015.8,736.0 1016.5,734.3 1017.2,735.1 1018.0,735.0 1018.8,736.1 1019.5,737.0 1020.2,736.9 1021.0,735.4 1021.8,734.9 1022.5,735.2 1023.2,735.7 1024.0,734.8 1024.8,733.4 1025.5,733.0 1026.2,735.3 1027.0,735.0 1027.8,734.2 1028.5,734.5 1029.2,735.2 1030.0,735.5 1030.8,733.0 1031.5,736.1 1032.2,733.1 1033.0,734.1 1033.8,734.6 1034.5,734.2 1035.2,731.9 1036.0,732.3 1036.8,730.8 1037.5,729.3 1038.2,732.3 1039.0,733.6 1039.8,732.4 1040.5,733.1 1041.2,732.8 1042.0,735.6 1042.8,734.6 1043.5,735.7 1044.2,734.3 1045.0,730.4 1045.8,734.2 1046.5,735.5 1047.2,733.3 1048.0,735.7 1048.8,733.2 1049.5,734.7 1050.2,735.5 1051.0,734.9 1051.8,736.4 1052.5,736.2 1053.2,736.2 1054.0,736.7 1054.8,735.0 1055.5,735.5 1056.2,737.4 1057.0,736.3 1057.8,736.4 1058.5,736.9 1059.2,736.2 1060.0,735.9 1060.8,735.8 1061.5,735.8 1062.2,737.8 1063.0,737.6 1063.8,737.1 1064.5,736.6 1065.2,737.3 1066.0,737.5 1066.8,737.4 1067.5,737.2 1068.2,737.7 1069.0,738.2 1069.8,738.4 1070.5,738.9 1071.2,739.4 1072.0,739.6 1072.8,739.3 1073.5,739.5 1074.2,739.6 1075.0,739.4 1075.8,739.6 1076.5,739.4 1077.2,739.4 1078.0,739.5 1078.8,739.4 1079.5,739.7 1080.2,739.6 1081.0,739.5 1081.8,739.2 1082.5,738.4 1083.2,738.7 1084.0,737.9 1084.8,738.1 1085.5,736.4 1086.2,737.7 1087.0,737.4 1087.8,737.2 1088.5,736.8 1089.2,737.3 1090.0,737.3 1090.8,738.0 1091.5,736.1 1092.2,737.4 1093.0,737.1 1093.8,736.9 1094.5,737.5 1095.2,737.8 1096.0,737.7 1096.8,737.0 1097.5,737.6 1098.2,734.8 1099.0,737.7 1099.8,736.4 1100.5,736.4 1101.2,735.3 1102.0,737.3 1102.8,737.7 1103.5,737.1 1104.2,736.4 1105.0,736.3 1105.8,737.0 1106.5,734.3 1107.2,736.6 1108.0,736.2 1108.8,737.4 1109.5,736.7 1110.2,737.1 1111.0,736.6 1111.8,736.7 1112.5,736.0 1113.2,736.9 1114.0,736.7 1114.8,735.9 1115.5,736.2 1116.2,737.2 1117.0,737.8 1117.8,737.6 1118.5,737.1 1119.2,736.4 1120.0,737.6 1120.8,737.5 1121.5,736.9 1122.2,736.6 1123.0,737.5 1123.8,738.0 1124.5,737.1 1125.2,738.1 1126.0,738.1 1126.8,737.3 1127.5,737.9 1128.2,738.1 1129.0,737.5 1129.8,737.0 1130.5,737.6 1131.2,738.8 1132.0,738.5 1132.8,739.0 1133.5,738.6 1134.2,738.1 1135.0,737.8 1135.8,737.5 1136.5,737.8 1137.2,737.3 1138.0,737.2 1138.8,737.3 1139.5,735.3 1140.2,736.9 1141.0,735.1 1141.8,735.4 1142.5,735.4 1143.2,736.1 1144.0,736.2 1144.8,736.3 1145.5,735.6 1146.2,736.7 1147.0,734.8 1147.8,734.2 1148.5,736.1 1149.2,735.8 1150.0,734.0 1150.8,735.0 1151.5,734.1 1152.2,733.6 1153.0,728.4 1153.8,730.7 1154.5,731.6 1155.2,727.7 1156.0,728.6 1156.8,731.4 1157.5,727.6 1158.2,732.8 1159.0,732.7 1159.8,730.7 1160.5,732.7 1161.2,735.7 1162.0,733.9 1162.8,734.2 1163.5,732.5 1164.2,732.7 1165.0,735.2 1165.8,734.4 1166.5,736.0 1167.2,731.6 1168.0,734.6 1168.8,733.8 1169.5,733.6 1170.2,732.3 1171.0,733.3 1171.8,734.5 1172.5,732.6 1173.2,731.9 1174.0,731.9 1174.8,727.5 1175.5,727.0 1176.2,731.2 1177.0,729.6 1177.8,729.6 1178.5,728.4 1179.2,733.8 1180.0,732.3 1180.8,732.4 1181.5,735.6 1182.2,733.3 1183.0,734.7 1183.8,732.7 1184.5,734.5 1185.2,736.6 1186.0,734.7 1186.8,736.7 1187.5,736.5 1188.2,737.3 1189.0,736.4 1189.8,736.2 1190.5,735.3 1191.2,737.8 1192.0,736.3 1192.8,736.4 1193.5,737.6 1194.2,737.1 1195.0,737.7 1195.8,738.9 1196.5,739.5 1197.2,739.4 1198.0,739.6 1198.8,739.5 1199.5,739.6 1200.2,739.6 1201.0,739.6 1201.8,739.3 1202.5,739.4 1203.2,739.4 1204.0,739.5 1204.8,739.5 1205.5,738.8 1206.2,738.3 1207.0,737.1 1207.8,737.5 1208.5,736.9 1209.2,737.3 1210.0,737.7 1210.8,736.8 1211.5,737.6 1212.2,737.8 1213.0,737.5 1213.8,737.2 1214.5,736.2 1215.2,737.2 1216.0,737.7 1216.8,736.2 1217.5,736.2 1218.2,735.6 1219.0,737.5 1219.8,735.4 1220.5,736.0 1221.2,735.4 1222.0,736.4 1222.8,735.5 1223.5,735.9 1224.2,736.0 1225.0,735.7 1225.8,734.8 1226.5,735.9 1227.2,734.4 1228.0,735.8 1228.8,736.1 1229.5,736.1 1230.2,735.8 1231.0,737.1 1231.8,736.4 1232.5,737.1 1233.2,736.2 1234.0,734.7 1234.8,737.9 1235.5,737.3 1236.2,737.7 1237.0,736.3 1237.8,737.1 1238.5,737.0 1239.2,737.3 1240.0,736.5 1240.8,737.8 1241.5,735.9 1242.2,729.8 1243.0,731.8 1243.8,730.4 1244.5,728.5 1245.2,729.4 1246.0,725.0 1246.8,716.8 1247.5,729.6 1248.2,723.2 1249.0,725.5 1249.8,725.3 1250.5,718.6 1251.2,723.8 1252.0,723.9 1252.8,722.1 1253.5,720.0 1254.2,729.9 1255.0,729.7 1255.8,719.2 1256.5,733.3 1257.2,730.8 1258.0,733.5 1258.8,730.5 1259.5,733.5 1260.2,734.2 1261.0,736.2 1261.8,736.6 1262.5,738.2 1263.2,737.6 1264.0,736.8 1264.8,737.4 1265.5,736.3 1266.2,735.1 1267.0,736.4 1267.8,737.0 1268.5,735.9 1269.2,736.9 1270.0,736.1 1270.8,736.6 1271.5,735.5 1272.2,735.7 1273.0,737.5 1273.8,737.2 1273.8,742.4 1273.0,744.7 1272.2,743.2 1271.5,743.2 1270.8,742.9 1270.0,743.8 1269.2,743.8 1268.5,743.3 1267.8,744.1 1267.0,744.3 1266.2,743.6 1265.5,743.1 1264.8,742.8 1264.0,742.8 1263.2,742.0 1262.5,741.6 1261.8,742.1 1261.0,745.7 1260.2,746.7 1259.5,744.2 1258.8,744.9 1258.0,746.4 1257.2,746.8 1256.5,749.7 1255.8,750.5 1255.0,756.6 1254.2,756.0 1253.5,758.9 1252.8,750.5 1252.0,754.2 1251.2,761.9 1250.5,759.4 1249.8,760.6 1249.0,756.2 1248.2,752.8 1247.5,756.8 1246.8,761.9 1246.0,751.2 1245.2,751.0 1244.5,752.5 1243.8,750.2 1243.0,745.4 1242.2,748.9 1241.5,744.3 1240.8,741.6 1240.0,742.8 1239.2,741.6 1238.5,742.3 1237.8,742.7 1237.0,744.0 1236.2,742.1 1235.5,743.0 1234.8,742.3 1234.0,744.3 1233.2,743.8 1232.5,742.4 1231.8,743.4 1231.0,743.4 1230.2,743.5 1229.5,743.4 1228.8,743.3 1228.0,744.1 1227.2,743.6 1226.5,745.3 1225.8,745.5 1225.0,743.7 1224.2,744.3 1223.5,743.8 1222.8,742.5 1222.0,742.9 1221.2,743.5 1220.5,743.8 1219.8,745.1 1219.0,745.8 1218.2,742.6 1217.5,744.5 1216.8,743.2 1216.0,742.8 1215.2,742.6 1214.5,742.4 1213.8,743.8 1213.0,743.2 1212.2,742.8 1211.5,742.8 1210.8,742.0 1210.0,743.3 1209.2,743.1 1208.5,742.8 1207.8,742.4 1207.0,741.5 1206.2,742.5 1205.5,740.9 1204.8,740.6 1204.0,740.4 1203.2,740.9 1202.5,740.6 1201.8,740.4 1201.0,740.7 1200.2,740.4 1199.5,740.6 1198.8,740.4 1198.0,740.3 1197.2,740.6 1196.5,740.5 1195.8,741.0 1195.0,742.3 1194.2,741.9 1193.5,742.7 1192.8,742.7 1192.0,743.2 1191.2,742.9 1190.5,744.3 1189.8,744.4 1189.0,744.4 1188.2,744.5 1187.5,743.5 1186.8,744.9 1186.0,744.2 1185.2,744.5 1184.5,744.0 1183.8,743.4 1183.0,744.3 1182.2,744.5 1181.5,745.8 1180.8,747.1 1180.0,747.8 1179.2,746.6 1178.5,753.0 1177.8,751.5 1177.0,750.8 1176.2,749.5 1175.5,750.8 1174.8,748.6 1174.0,746.6 1173.2,747.3 1172.5,748.2 1171.8,749.6 1171.0,746.8 1170.2,746.9 1169.5,746.1 1168.8,745.2 1168.0,746.0 1167.2,747.5 1166.5,745.6 1165.8,745.8 1165.0,745.0 1164.2,746.4 1163.5,746.4 1162.8,746.4 1162.0,748.0 1161.2,746.4 1160.5,747.5 1159.8,748.8 1159.0,745.3 1158.2,747.5 1157.5,749.1 1156.8,748.9 1156.0,752.9 1155.2,754.0 1154.5,748.6 1153.8,749.1 1153.0,750.0 1152.2,747.6 1151.5,751.0 1150.8,748.2 1150.0,745.0 1149.2,744.5 1148.5,746.3 1147.8,746.0 1147.0,743.3 1146.2,746.5 1145.5,745.1 1144.8,745.4 1144.0,743.9 1143.2,744.5 1142.5,745.9 1141.8,744.4 1141.0,743.3 1140.2,746.3 1139.5,743.8 1138.8,743.8 1138.0,744.7 1137.2,743.4 1136.5,742.5 1135.8,743.6 1135.0,743.1 1134.2,742.3 1133.5,741.6 1132.8,740.6 1132.0,741.9 1131.2,741.0 1130.5,741.7 1129.8,741.3 1129.0,742.6 1128.2,742.5 1127.5,742.3 1126.8,742.4 1126.0,742.5 1125.2,743.4 1124.5,743.1 1123.8,743.2 1123.0,742.3 1122.2,742.3 1121.5,744.0 1120.8,742.8 1120.0,742.4 1119.2,742.7 1118.5,742.1 1117.8,742.7 1117.0,744.2 1116.2,742.6 1115.5,743.3 1114.8,743.1 1114.0,743.3 1113.2,742.6 1112.5,743.8 1111.8,742.6 1111.0,742.4 1110.2,742.5 1109.5,743.7 1108.8,742.3 1108.0,743.2 1107.2,744.0 1106.5,744.9 1105.8,743.5 1105.0,745.6 1104.2,743.2 1103.5,743.9 1102.8,744.1 1102.0,742.6 1101.2,742.3 1100.5,745.1 1099.8,743.2 1099.0,743.6 1098.2,742.5 1097.5,743.5 1096.8,742.2 1096.0,743.1 1095.2,743.2 1094.5,742.9 1093.8,743.0 1093.0,742.1 1092.2,741.9 1091.5,742.4 1090.8,742.5 1090.0,742.4 1089.2,742.6 1088.5,742.0 1087.8,741.9 1087.0,742.4 1086.2,742.4 1085.5,742.9 1084.8,742.0 1084.0,741.9 1083.2,741.6 1082.5,741.5 1081.8,740.9 1081.0,740.3 1080.2,740.7 1079.5,740.5 1078.8,740.6 1078.0,740.4 1077.2,740.6 1076.5,740.6 1075.8,740.5 1075.0,740.4 1074.2,740.4 1073.5,740.4 1072.8,740.6 1072.0,740.5 1071.2,740.6 1070.5,741.4 1069.8,742.8 1069.0,742.6 1068.2,742.5 1067.5,742.0 1066.8,742.9 1066.0,741.9 1065.2,742.1 1064.5,742.2 1063.8,742.9 1063.0,743.2 1062.2,744.4 1061.5,742.5 1060.8,743.8 1060.0,744.4 1059.2,744.1 1058.5,744.0 1057.8,743.3 1057.0,742.9 1056.2,745.2 1055.5,743.9 1054.8,744.4 1054.0,744.4 1053.2,743.6 1052.5,745.8 1051.8,744.0 1051.0,744.1 1050.2,745.5 1049.5,744.1 1048.8,743.8 1048.0,745.0 1047.2,744.6 1046.5,746.0 1045.8,744.5 1045.0,745.8 1044.2,744.9 1043.5,746.6 1042.8,751.2 1042.0,745.0 1041.2,745.4 1040.5,745.6 1039.8,747.4 1039.0,747.3 1038.2,745.2 1037.5,749.4 1036.8,745.1 1036.0,747.8 1035.2,745.8 1034.5,747.7 1033.8,745.1 1033.0,746.5 1032.2,749.3 1031.5,747.5 1030.8,744.4 1030.0,745.8 1029.2,746.0 1028.5,746.0 1027.8,748.6 1027.0,743.9 1026.2,745.2 1025.5,744.3 1024.8,746.3 1024.0,743.8 1023.2,743.9 1022.5,743.6 1021.8,744.5 1021.0,743.6 1020.2,745.0 1019.5,744.0 1018.8,743.4 1018.0,744.1 1017.2,744.0 1016.5,743.8 1015.8,743.7 1015.0,744.8 1014.2,744.3 1013.5,743.9 1012.8,743.8 1012.0,743.9 1011.2,744.1 1010.5,743.7 1009.8,743.6 1009.0,743.7 1008.2,743.4 1007.5,744.0 1006.8,743.1 1006.0,744.0 1005.2,742.3 1004.5,742.6 1003.8,744.9 1003.0,742.3 1002.2,742.7 1001.5,742.3 1000.8,742.0 1000.0,742.4 999.2,742.6 998.5,742.2 997.8,741.7 997.0,741.4 996.2,741.4 995.5,740.4 994.8,740.6 994.0,740.4 993.2,740.7 992.5,740.5 991.8,740.4 991.0,740.4 990.2,740.4 989.5,741.7 988.8,741.7 988.0,742.8 987.2,742.7 986.5,741.8 985.8,742.1 985.0,742.4 984.2,742.5 983.5,743.4 982.8,742.9 982.0,743.1 981.2,742.2 980.5,744.0 979.8,743.6 979.0,743.5 978.2,742.6 977.5,742.6 976.8,743.7 976.0,745.1 975.2,743.3 974.5,745.8 973.8,743.7 973.0,746.9 972.2,743.7 971.5,745.5 970.8,744.7 970.0,743.6 969.2,746.3 968.5,742.8 967.8,743.5 967.0,744.5 966.2,744.6 965.5,744.8 964.8,744.3 964.0,743.9 963.2,743.6 962.5,746.8 961.8,743.2 961.0,746.6 960.2,743.6 959.5,744.6 958.8,744.6 958.0,745.5 957.2,745.3 956.5,746.9 955.8,744.7 955.0,744.8 954.2,744.2 953.5,744.2 952.8,745.1 952.0,743.1 951.2,743.1 950.5,743.2 949.8,745.5 949.0,743.1 948.2,743.6 947.5,744.4 946.8,745.0 946.0,746.3 945.2,744.8 944.5,744.7 943.8,745.0 943.0,744.8 942.2,746.1 941.5,743.2 940.8,744.7 940.0,742.9 939.2,742.9 938.5,745.0 937.8,744.9 937.0,744.9 936.2,744.6 935.5,747.4 934.8,744.8 934.0,742.9 933.2,744.6 932.5,744.9 931.8,742.9 931.0,742.6 930.2,743.9 929.5,745.3 928.8,743.3 928.0,743.4 927.2,743.0 926.5,744.7 925.8,742.9 925.0,743.7 924.2,743.7 923.5,743.2 922.8,742.7 922.0,743.0 921.2,744.1 920.5,743.8 919.8,742.0 919.0,742.1 918.2,742.1 917.5,741.5 916.8,741.6 916.0,741.6 915.2,740.8 914.5,740.6 913.8,740.5 913.0,740.4 912.2,740.7 911.5,740.6 910.8,740.4 910.0,740.6 909.2,740.8 908.5,740.6 907.8,740.8 907.0,740.4 906.2,741.4 905.5,741.4 904.8,742.7 904.0,742.0 903.2,742.3 902.5,742.3 901.8,743.4 901.0,744.1 900.2,742.4 899.5,742.8 898.8,742.9 898.0,741.9 897.2,743.1 896.5,743.4 895.8,742.5 895.0,743.2 894.2,743.8 893.5,745.5 892.8,744.0 892.0,743.8 891.2,743.4 890.5,743.0 889.8,743.7 889.0,744.0 888.2,742.3 887.5,744.9 886.8,742.6 886.0,743.0 885.2,743.5 884.5,742.9 883.8,743.2 883.0,744.2 882.2,743.8 881.5,742.9 880.8,743.9 880.0,742.7 879.2,742.8 878.5,744.2 877.8,742.6 877.0,744.1 876.2,744.7 875.5,744.6 874.8,744.8 874.0,745.0 873.2,743.3 872.5,743.9 871.8,743.9 871.0,743.0 870.2,743.0 869.5,744.4 868.8,745.8 868.0,743.9 867.2,743.8 866.5,743.3 865.8,744.4 865.0,743.4 864.2,744.2 863.5,743.9 862.8,744.8 862.0,744.3 861.2,745.1 860.5,744.6 859.8,745.6 859.0,744.2 858.2,745.1 857.5,744.3 856.8,742.9 856.0,744.3 855.2,743.9 854.5,745.0 853.8,744.8 853.0,744.0 852.2,744.1 851.5,743.5 850.8,745.0 850.0,744.6 849.2,743.2 848.5,743.5 847.8,743.2 847.0,745.2 846.2,743.2 845.5,744.1 844.8,744.4 844.0,743.4 843.2,744.0 842.5,744.6 841.8,743.0 841.0,743.2 840.2,742.7 839.5,743.0 838.8,742.7 838.0,742.9 837.2,745.1 836.5,744.0 835.8,743.2 835.0,744.3 834.2,742.5 833.5,742.5 832.8,743.5 832.0,742.5 831.2,745.2 830.5,743.5 829.8,744.8 829.0,743.0 828.2,742.2 827.5,743.2 826.8,743.4 826.0,742.2 825.2,742.4 824.5,743.9 823.8,743.4 823.0,743.1 822.2,742.5 821.5,742.2 820.8,742.5 820.0,741.8 819.2,742.7 818.5,741.6 817.8,742.9 817.0,742.2 816.2,741.7 815.5,741.8 814.8,742.4 814.0,741.5 813.2,741.2 812.5,740.6 811.8,740.6 811.0,740.6 810.2,740.5 809.5,740.4 808.8,740.7 808.0,741.8 807.2,742.0 806.5,741.6 805.8,742.4 805.0,743.2 804.2,743.0 803.5,743.1 802.8,742.9 802.0,744.9 801.2,742.5 800.5,743.1 799.8,745.3 799.0,743.4 798.2,743.2 797.5,744.3 796.8,743.5 796.0,743.5 795.2,743.3 794.5,746.4 793.8,745.7 793.0,743.7 792.2,744.1 791.5,744.2 790.8,743.9 790.0,744.9 789.2,743.6 788.5,743.4 787.8,744.0 787.0,744.5 786.2,744.4 785.5,747.9 784.8,743.7 784.0,745.6 783.2,743.9 782.5,743.1 781.8,743.5 781.0,743.0 780.2,743.1 779.5,744.2 778.8,743.3 778.0,743.4 777.2,745.4 776.5,746.1 775.8,744.1 775.0,742.7 774.2,743.2 773.5,743.3 772.8,745.4 772.0,746.0 771.2,743.7 770.5,743.0 769.8,742.5 769.0,745.4 768.2,744.4 767.5,744.4 766.8,742.3 766.0,742.6 765.2,743.0 764.5,742.6 763.8,742.7 763.0,741.6 762.2,742.1 761.5,741.3 760.8,740.5 760.0,740.5 759.2,740.6 758.5,740.4 757.8,741.0 757.0,741.9 756.2,741.2 755.5,741.8 754.8,742.0 754.0,744.0 753.2,742.6 752.5,743.0 751.8,742.5 751.0,742.3 750.2,742.8 749.5,744.1 748.8,742.8 748.0,743.0 747.2,742.4 746.5,743.7 745.8,743.7 745.0,742.4 744.2,743.5 743.5,744.1 742.8,742.8 742.0,743.1 741.2,743.7 740.5,743.5 739.8,743.1 739.0,743.7 738.2,744.1 737.5,744.7 736.8,743.8 736.0,744.6 735.2,746.2 734.5,743.1 733.8,744.8 733.0,744.4 732.2,744.2 731.5,744.2 730.8,744.5 730.0,744.1 729.2,744.8 728.5,745.0 727.8,743.2 727.0,744.3 726.2,743.4 725.5,744.8 724.8,744.9 724.0,743.3 723.2,745.5 722.5,744.4 721.8,747.5 721.0,748.0 720.2,747.2 719.5,751.4 718.8,747.9 718.0,747.2 717.2,746.0 716.5,744.5 715.8,744.0 715.0,745.8 714.2,745.8 713.5,744.9 712.8,745.7 712.0,744.5 711.2,745.9 710.5,747.4 709.8,743.8 709.0,744.7 708.2,744.5 707.5,745.1 706.8,745.0 706.0,745.0 705.2,743.7 704.5,744.8 703.8,748.0 703.0,744.1 702.2,746.0 701.5,745.7 700.8,744.6 700.0,743.9 699.2,743.8 698.5,745.4 697.8,744.9 697.0,747.0 696.2,744.8 695.5,744.8 694.8,745.6 694.0,745.6 693.2,744.3 692.5,745.9 691.8,748.8 691.0,745.5 690.2,745.0 689.5,744.5 688.8,746.8 688.0,749.2 687.2,747.6 686.5,748.2 685.8,746.2 685.0,747.6 684.2,748.3 683.5,749.8 682.8,750.7 682.0,750.7 681.2,749.9 680.5,747.6 679.8,746.5 679.0,748.3 678.2,747.1 677.5,747.1 676.8,746.2 676.0,746.0 675.2,746.3 674.5,746.2 673.8,744.3 673.0,743.5 672.2,746.0 671.5,745.6 670.8,743.5 670.0,745.0 669.2,744.0 668.5,744.4 667.8,743.0 667.0,745.0 666.2,745.7 665.5,743.9 664.8,743.5 664.0,744.2 663.2,742.4 662.5,743.9 661.8,743.0 661.0,743.3 660.2,742.3 659.5,743.7 658.8,743.4 658.0,744.9 657.2,743.2 656.5,741.9 655.8,742.0 655.0,743.6 654.2,741.6 653.5,741.8 652.8,741.5 652.0,742.2 651.2,742.1 650.5,741.5 649.8,740.4 649.0,740.6 648.2,740.6 647.5,740.3 646.8,740.6 646.0,740.6 645.2,740.4 644.5,740.6 643.8,740.8 643.0,740.5 642.2,740.5 641.5,740.4 640.8,740.8 640.0,740.6 639.2,741.4 638.5,742.0 637.8,742.0 637.0,741.9 636.2,742.9 635.5,742.5 634.8,744.9 634.0,742.7 633.2,742.5 632.5,744.9 631.8,743.0 631.0,743.9 630.2,742.5 629.5,743.7 628.8,744.4 628.0,745.8 627.2,744.2 626.5,743.3 625.8,744.9 625.0,744.5 624.2,743.3 623.5,744.0 622.8,743.9 622.0,743.4 621.2,744.4 620.5,745.0 619.8,743.5 619.0,744.3 618.2,746.1 617.5,746.0 616.8,747.5 616.0,744.1 615.2,745.0 614.5,746.3 613.8,745.7 613.0,745.5 612.2,744.8 611.5,746.9 610.8,748.7 610.0,752.1 609.2,746.7 608.5,746.7 607.8,747.2 607.0,745.2 606.2,745.4 605.5,745.9 604.8,745.9 604.0,746.1 603.2,746.2 602.5,746.1 601.8,743.8 601.0,746.3 600.2,745.6 599.5,746.2 598.8,745.1 598.0,745.0 597.2,743.6 596.5,744.4 595.8,744.6 595.0,743.6 594.2,745.3 593.5,744.2 592.8,744.4 592.0,745.0 591.2,745.1 590.5,747.6 589.8,744.0 589.0,744.1 588.2,749.3 587.5,745.0 586.8,745.8 586.0,743.8 585.2,746.4 584.5,744.7 583.8,744.6 583.0,746.0 582.2,743.7 581.5,744.0 580.8,745.5 580.0,744.9 579.2,746.3 578.5,744.9 577.8,746.1 577.0,746.1 576.2,746.3 575.5,747.1 574.8,745.0 574.0,745.4 573.2,746.5 572.5,746.7 571.8,751.3 571.0,749.4 570.2,748.6 569.5,747.0 568.8,750.1 568.0,749.2 567.2,746.1 566.5,748.9 565.8,751.1 565.0,745.1 564.2,748.0 563.5,748.7 562.8,751.5 562.0,747.4 561.2,746.3 560.5,749.8 559.8,747.5 559.0,748.7 558.2,753.5 557.5,749.6 556.8,747.7 556.0,749.1 555.2,749.9 554.5,748.3 553.8,746.9 553.0,748.4 552.2,746.4 551.5,746.1 550.8,744.5 550.0,743.7 549.2,744.8 548.5,744.6 547.8,743.9 547.0,744.9 546.2,744.2 545.5,744.0 544.8,745.1 544.0,744.6 543.2,743.6 542.5,742.2 541.8,743.1 541.0,742.7 540.2,743.2 539.5,742.5 538.8,742.9 538.0,742.5 537.2,741.6 536.5,741.3 535.8,741.3 535.0,740.8 534.2,740.5 533.5,740.4 532.8,740.5 532.0,740.5 531.2,740.7 530.5,740.6 529.8,740.4 529.0,740.5 528.2,740.3 527.5,740.4 526.8,740.7 526.0,740.4 525.2,741.9 524.5,741.1 523.8,742.2 523.0,741.8 522.2,741.8 521.5,743.5 520.8,741.7 520.0,743.8 519.2,742.2 518.5,742.0 517.8,743.2 517.0,742.8 516.2,742.0 515.5,742.5 514.8,744.8 514.0,744.4 513.2,743.4 512.5,745.0 511.8,743.4 511.0,742.9 510.2,743.0 509.5,742.3 508.8,742.8 508.0,742.1 507.2,742.4 506.5,742.4 505.8,742.6 505.0,742.0 504.2,742.4 503.5,742.0 502.8,741.6 502.0,742.6 501.2,742.3 500.5,741.8 499.8,741.1 499.0,740.5 498.2,740.6 497.5,740.3 496.8,740.5 496.0,740.4 495.2,740.6 494.5,740.4 493.8,740.4 493.0,740.7 492.2,741.1 491.5,741.6 490.8,741.5 490.0,742.7 489.2,742.4 488.5,742.5 487.8,741.8 487.0,744.4 486.2,742.2 485.5,742.7 484.8,743.2 484.0,743.3 483.2,744.6 482.5,743.2 481.8,742.7 481.0,743.4 480.2,743.4 479.5,746.3 478.8,744.2 478.0,745.6 477.2,744.8 476.5,743.3 475.8,746.5 475.0,744.4 474.2,745.1 473.5,744.7 472.8,743.6 472.0,743.3 471.2,744.0 470.5,744.2 469.8,743.9 469.0,743.4 468.2,746.1 467.5,743.8 466.8,744.9 466.0,743.5 465.2,743.9 464.5,743.5 463.8,743.7 463.0,745.0 462.2,743.1 461.5,743.1 460.8,742.4 460.0,743.4 459.2,742.5 458.5,742.1 457.8,742.9 457.0,742.4 456.2,741.9 455.5,742.2 454.8,742.1 454.0,743.0 453.2,741.1 452.5,741.3 451.8,740.5 451.0,740.6 450.2,740.4 449.5,740.5 448.8,740.5 448.0,740.6 447.2,740.6 446.5,740.7 445.8,740.4 445.0,740.6 444.2,740.6 443.5,740.6 442.8,740.5 442.0,740.7 441.2,740.5 440.5,740.5 439.8,740.4 439.0,740.5 438.2,740.6 437.5,740.6 436.8,740.8 436.0,740.5" fill="#f0c038"/><rect x="434" y="740" width="840" height="1" fill="#8a8a20"/></svg>
<svg class="a" style="left:428px;top:497px" width="8" height="8"><rect x=".5" y=".5" width="7" height="7" fill="#40e8d8" stroke="#000"/><path d="M1 4h6" stroke="#20a090"/></svg>
<svg class="a" style="left:725px;top:497px" width="8" height="8"><rect x=".5" y=".5" width="7" height="7" fill="#40e8d8" stroke="#000"/><path d="M4 1v6M1 4h6" stroke="#20a090"/></svg>
<svg class="a" style="left:428px;top:577px" width="8" height="8"><rect x=".5" y=".5" width="7" height="7" fill="#40e8d8" stroke="#000"/><path d="M1 4h6" stroke="#20a090"/></svg>
<svg class="a" style="left:725px;top:577px" width="8" height="8"><rect x=".5" y=".5" width="7" height="7" fill="#40e8d8" stroke="#000"/><path d="M4 1v6M1 4h6" stroke="#20a090"/></svg>
<svg class="a" style="left:428px;top:657px" width="8" height="8"><rect x=".5" y=".5" width="7" height="7" fill="#40e8d8" stroke="#000"/><path d="M1 4h6" stroke="#20a090"/></svg>
<svg class="a" style="left:725px;top:657px" width="8" height="8"><rect x=".5" y=".5" width="7" height="7" fill="#40e8d8" stroke="#000"/><path d="M4 1v6M1 4h6" stroke="#20a090"/></svg>
<svg class="a" style="left:428px;top:737px" width="8" height="8"><rect x=".5" y=".5" width="7" height="7" fill="#40e8d8" stroke="#000"/><path d="M1 4h6" stroke="#20a090"/></svg>
<div class="a" style="left:1275px;top:459px;width:19px;height:343px;background:#fcfcfc"></div>
<div class="a" style="left:1277px;top:461px;width:14px;height:14px;background:linear-gradient(90deg,#c4d2f4,#dce6fc 50%,#b8c8f0);border-radius:2px"></div>
<svg class="a" style="left:1279px;top:464px" width="10" height="7"><path d="M1 6l4-4 4 4" stroke="#4a5a88" stroke-width="2" fill="none"/></svg>
<div class="a" style="left:1277px;top:477px;width:14px;height:305px;background:linear-gradient(90deg,#b8c8f4,#d0dcfc 45%,#c4d2f8 70%,#b0c0ec);border-radius:2px"></div>
<svg class="a" style="left:1280px;top:626px" width="8" height="6"><path d="M0 .5h8M0 2.5h8M0 4.5h8" stroke="#9aacd8"/></svg>
<div class="a" style="left:1277px;top:784px;width:14px;height:15px;background:linear-gradient(90deg,#c4d2f4,#dce6fc 50%,#b8c8f0);border-radius:2px"></div>
<svg class="a" style="left:1279px;top:789px" width="10" height="7"><path d="M1 1l4 4 4-4" stroke="#4a5a88" stroke-width="2" fill="none"/></svg><!--/TRACKS-->
</body></html>
